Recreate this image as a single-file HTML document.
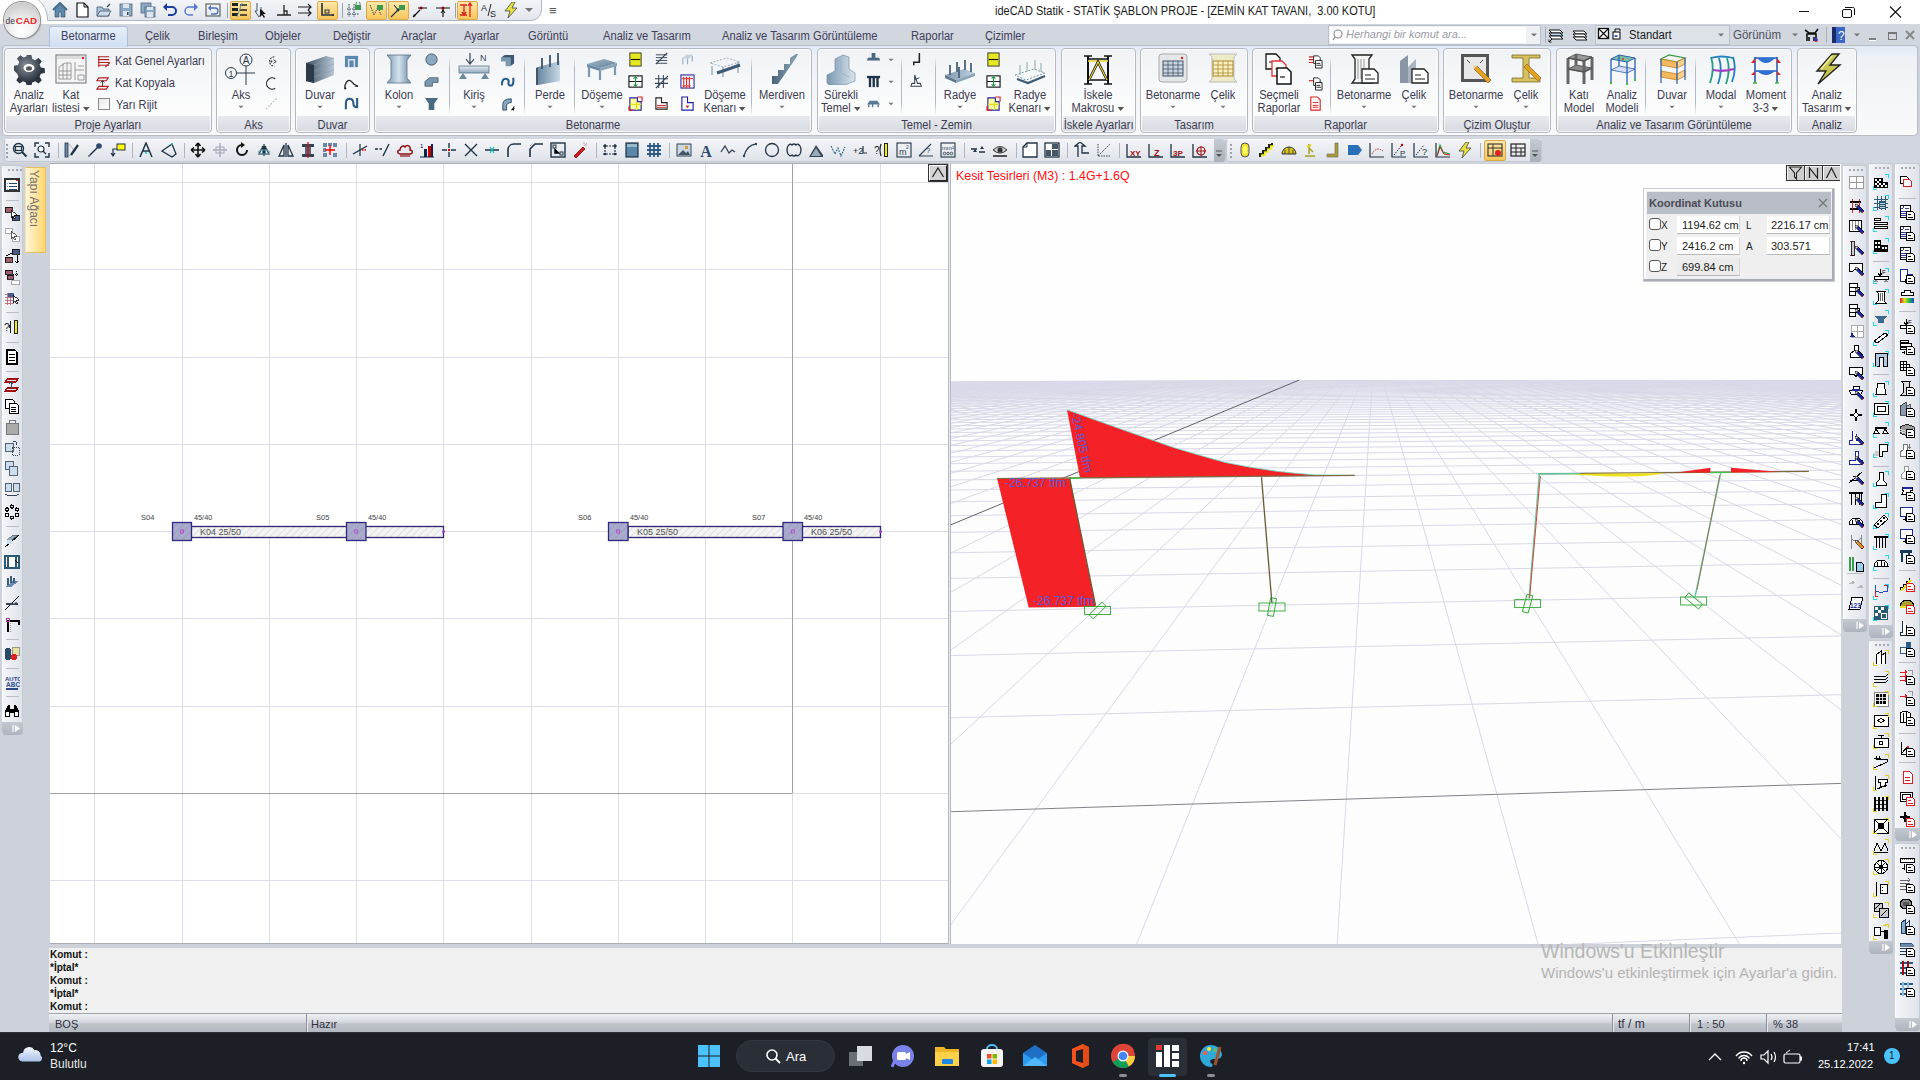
<!DOCTYPE html><html><head><meta charset="utf-8"><style>
*{margin:0;padding:0;box-sizing:border-box}
html,body{width:1920px;height:1080px;overflow:hidden;background:#cdd2da;font-family:"Liberation Sans",sans-serif;}
.a{position:absolute}
.t{position:absolute;white-space:nowrap;line-height:1}
svg{position:absolute;overflow:hidden}
</style></head><body>
<div class="a" style="left:0px;top:0px;width:1920px;height:24px;background:#fff"></div>
<div class="a" style="left:0px;top:24px;width:1920px;height:22px;background:#d2d7df"></div>
<div class="a" style="left:2px;top:45px;width:1916px;height:91px;background:linear-gradient(#dfe9f6 0%,#eef1f5 12%,#f5f6f8 60%,#f9f9fa 100%);border:1px solid #b9bec6;border-radius:4px"></div>
<div class="a" style="left:0px;top:136px;width:1920px;height:27px;background:#d2d7df"></div>
<svg style="left:0;top:0" width="560" height="24"><defs><linearGradient id="qg" x1="0" y1="0" x2="0" y2="1"><stop offset="0" stop-color="#f3f5f8"/><stop offset="1" stop-color="#e2e6ec"/></linearGradient></defs><path d="M37.5,-1 A27,27 0 0 1 47.5,18 V20.5 H531 A10.5,10.5 0 0 0 541.5,10 V-1 Z" fill="url(#qg)" stroke="#aeb6c2" stroke-width="1"/></svg>
<div class="a" style="left:4px;top:2px;width:36px;height:36px;border-radius:50%;background:radial-gradient(circle at 50% 80%,#ffffff 0%,#f4f4f4 30%,#d0d0d0 75%,#c4c4c4 100%);box-shadow:0 0 0 1px #8a8a8a, 1px 1px 2px rgba(0,0,0,.3)"></div>
<svg style="left:0;top:0" width="44" height="40"><text x="5.5" y="23.8" font-family="Liberation Sans" font-size="9.5" fill="#3a3a3a" textLength="9.5" lengthAdjust="spacingAndGlyphs">de</text><text x="15.8" y="23.8" font-family="Liberation Sans" font-size="9.5" font-weight="bold" fill="#e82828" textLength="21.3" lengthAdjust="spacingAndGlyphs">CAD</text></svg>
<div class="a" style="left:230px;top:1px;width:21px;height:19px;border-radius:2px;background:linear-gradient(#fde7a8,#f7c65a);border:1px solid #d9a94a"></div>
<div class="a" style="left:317px;top:1px;width:21px;height:19px;border-radius:2px;background:linear-gradient(#fde7a8,#f7c65a);border:1px solid #d9a94a"></div>
<div class="a" style="left:366px;top:1px;width:21px;height:19px;border-radius:2px;background:linear-gradient(#fde7a8,#f7c65a);border:1px solid #d9a94a"></div>
<div class="a" style="left:388px;top:1px;width:21px;height:19px;border-radius:2px;background:linear-gradient(#fde7a8,#f7c65a);border:1px solid #d9a94a"></div>
<div class="a" style="left:457px;top:1px;width:21px;height:19px;border-radius:2px;background:linear-gradient(#fde7a8,#f7c65a);border:1px solid #d9a94a"></div>
<div class="a" style="left:227px;top:3px;width:1px;height:15px;background:#9aa2ae"></div>
<div class="a" style="left:342px;top:3px;width:1px;height:15px;background:#9aa2ae"></div>
<div class="a" style="left:455px;top:3px;width:1px;height:15px;background:#9aa2ae"></div>
<svg style="left:52px;top:2px" width="16" height="16" viewBox="0 0 16 16"><path d="M1,8L8,1L15,8" fill="none" stroke="#3d6a8a" stroke-width="2"/><path d="M3,8V15H7V10H9V15H13V8L8,3Z" fill="#5b8bb0" stroke="#345" stroke-width="0.6"/></svg>
<svg style="left:74px;top:2px" width="16" height="16" viewBox="0 0 16 16"><path d="M3,1H10L14,5V15H3Z" fill="#fff" stroke="#111" stroke-width="1.2"/><path d="M10,1V5H14" fill="none" stroke="#111"/></svg>
<svg style="left:96px;top:2px" width="16" height="16" viewBox="0 0 16 16"><path d="M1,5H6L7,7H13V14H1Z" fill="#a8c4dc" stroke="#456" stroke-width="0.8"/><path d="M1,14L4,9H15L12,14Z" fill="#c8dcec" stroke="#456" stroke-width="0.8"/><path d="M11,5L14,2" stroke="#345" stroke-width="1.2"/></svg>
<svg style="left:118px;top:2px" width="16" height="16" viewBox="0 0 16 16"><rect x="2" y="2" width="12" height="12" fill="#8aa8c4" stroke="#567" stroke-width="0.8"/><rect x="5" y="2" width="6" height="4" fill="#dde6ee"/><rect x="5" y="9" width="6" height="5" fill="#dde6ee"/><rect x="9" y="10" width="1.5" height="3" fill="#345"/></svg>
<svg style="left:140px;top:2px" width="16" height="16" viewBox="0 0 16 16"><rect x="1" y="1" width="10" height="10" fill="#8aa8c4" stroke="#567" stroke-width="0.8"/><rect x="5" y="5" width="10" height="10" fill="#8aa8c4" stroke="#567" stroke-width="0.8"/><rect x="7" y="5" width="6" height="3" fill="#dde6ee"/><rect x="7" y="10" width="6" height="5" fill="#dde6ee"/></svg>
<svg style="left:162px;top:2px" width="16" height="16" viewBox="0 0 16 16"><path d="M4,5H10A4,4 0 0 1 10,13H6" fill="none" stroke="#1a3ea0" stroke-width="2"/><path d="M1,5L5,1V9Z" fill="#1a3ea0"/></svg>
<svg style="left:183px;top:2px" width="16" height="16" viewBox="0 0 16 16"><path d="M12,5H6A4,4 0 0 0 6,13H10" fill="none" stroke="#5a7ad0" stroke-width="1.5"/><path d="M15,5L11,1V9Z" fill="#5a7ad0"/></svg>
<svg style="left:205px;top:2px" width="16" height="16" viewBox="0 0 16 16"><rect x="1" y="2" width="14" height="12" fill="none" stroke="#555" stroke-width="1.1"/><path d="M5,6H10A3,3 0 0 1 10,12H6" fill="none" stroke="#4a70c0" stroke-width="1.3"/><path d="M3,6L6,3V9Z" fill="#4a70c0"/></svg>
<svg style="left:232px;top:2px" width="16" height="16" viewBox="0 0 16 16"><rect x="0" y="1" width="6" height="3" fill="#222"/><rect x="0" y="6" width="6" height="3" fill="#222"/><rect x="0" y="11" width="6" height="3" fill="#222"/><path d="M8,3H15M8,8H15M8,13H15" stroke="#222" stroke-width="1.4"/><path d="M5,15L10,1" stroke="#59a" stroke-width="1"/></svg>
<svg style="left:253px;top:2px" width="16" height="16" viewBox="0 0 16 16"><path d="M4,1V9H2L6,15L10,9H8V5" fill="none" stroke="#456" stroke-width="1"/><path d="M7,7L7,15L9,13L11,16L12,15L10,12L13,12Z" fill="#111"/></svg>
<svg style="left:276px;top:2px" width="16" height="16" viewBox="0 0 16 16"><path d="M1,13H15M8,13V3M8,9H11V13" fill="none" stroke="#222" stroke-width="1.3"/></svg>
<svg style="left:297px;top:2px" width="16" height="16" viewBox="0 0 16 16"><path d="M1,5H14M1,11H14M11,2L14,5L11,8M11,8L14,11L11,14" fill="none" stroke="#222" stroke-width="1.2"/></svg>
<svg style="left:319px;top:2px" width="16" height="16" viewBox="0 0 16 16"><path d="M3,1V13H15" fill="none" stroke="#234" stroke-width="1.6"/><rect x="6" y="8" width="4" height="3" fill="none" stroke="#234"/><circle cx="14" cy="13" r="1" fill="#234"/></svg>
<svg style="left:346px;top:2px" width="16" height="16" viewBox="0 0 16 16"><path d="M3,2V15M8,2V15M1,7H13M1,12H13" stroke="#234" stroke-width="0.9" stroke-dasharray="1.5,1"/><rect x="9" y="3" width="6" height="5" fill="#3a9a50"/><path d="M10,3V1.5A2,2 0 0 1 14,1.5V3" fill="none" stroke="#3a9a50"/></svg>
<svg style="left:368px;top:2px" width="16" height="16" viewBox="0 0 16 16"><path d="M2,3L6,13L10,5L13,13" fill="none" stroke="#234" stroke-width="0.9" stroke-dasharray="1.5,1"/><rect x="9" y="3" width="6" height="5" fill="#3a9a50"/></svg>
<svg style="left:390px;top:2px" width="16" height="16" viewBox="0 0 16 16"><path d="M1,15L9,7M4,3L9,9" stroke="#234" stroke-width="1.1"/><circle cx="8" cy="8" r="1.4" fill="#234"/><rect x="9" y="3" width="6" height="5" fill="#3a9a50"/></svg>
<svg style="left:412px;top:2px" width="16" height="16" viewBox="0 0 16 16"><path d="M1,15L8,8M6,6H15" stroke="#111" stroke-width="1.2"/><circle cx="9" cy="6" r="1.5" fill="#900"/><path d="M1,15L4,14L2,12Z" fill="#111"/></svg>
<svg style="left:435px;top:2px" width="16" height="16" viewBox="0 0 16 16"><path d="M1,6H15M8,6V15" stroke="#111" stroke-width="1.2"/><circle cx="8" cy="6" r="1.5" fill="#900"/><path d="M6,11L8,8L10,11" fill="none" stroke="#111"/></svg>
<svg style="left:459px;top:2px" width="16" height="16" viewBox="0 0 16 16"><path d="M1,3H8M1,13H8" stroke="#e02020" stroke-width="1.3"/><path d="M5,3V13M11,1V15M9,4L11,1L13,4M3,10L5,13L7,10" fill="none" stroke="#e02020" stroke-width="1.3"/></svg>
<svg style="left:481px;top:2px" width="16" height="16" viewBox="0 0 16 16"><text x="0" y="9" font-size="9" fill="#222">A</text><path d="M7,14L10,2" stroke="#222"/><text x="9" y="15" font-size="9" fill="#222">S</text></svg>
<svg style="left:503px;top:2px" width="16" height="16" viewBox="0 0 16 16"><path d="M9,0L2,9H7L5,16L14,6H9L12,0Z" fill="#e8e040" stroke="#444" stroke-width="0.8"/></svg>
<svg style="left:521px;top:2px" width="16" height="16" viewBox="0 0 16 16"><path d="M4,6H12L8,10Z" fill="#777"/></svg>
<div class="t" style="left:549px;top:4px;font-size:10px;color:#555;"><b style="font-size:13px;color:#555">&#8801;</b></div>
<div class="t" style="left:995px;top:5px;font-size:12.5px;color:#1a1a1a;transform:scaleX(.88);transform-origin:left">ideCAD Statik - STATİK ŞABLON PROJE - [ZEMİN KAT TAVANI,&nbsp; 3.00 KOTU]</div>
<svg style="left:1795px;top:4px" width="120" height="16"><path d="M4,7.5H14" stroke="#111" stroke-width="1"/><rect x="47.5" y="5.5" width="9" height="8" rx="1.5" fill="none" stroke="#111"/><path d="M50,3.5H57.5A1.5,1.5 0 0 1 59.5,5V11" fill="none" stroke="#111"/><path d="M95,2.5L106,13.5M106,2.5L95,13.5" stroke="#111" stroke-width="1.1"/></svg>
<div class="a" style="left:49px;top:26px;width:79px;height:21px;background:linear-gradient(#e6eef9,#cfdff3);border:1px solid #aebfd6;border-bottom:none;border-radius:3px 3px 0 0"></div>
<div class="t" style="left:61px;top:30px;font-size:12px;color:#40405a;transform:scaleX(.93);transform-origin:left">Betonarme</div>
<div class="t" style="left:145px;top:30px;font-size:12px;color:#40405a;transform:scaleX(.93);transform-origin:left">Çelik</div>
<div class="t" style="left:198px;top:30px;font-size:12px;color:#40405a;transform:scaleX(.93);transform-origin:left">Birleşim</div>
<div class="t" style="left:265px;top:30px;font-size:12px;color:#40405a;transform:scaleX(.93);transform-origin:left">Objeler</div>
<div class="t" style="left:333px;top:30px;font-size:12px;color:#40405a;transform:scaleX(.93);transform-origin:left">Değiştir</div>
<div class="t" style="left:401px;top:30px;font-size:12px;color:#40405a;transform:scaleX(.93);transform-origin:left">Araçlar</div>
<div class="t" style="left:464px;top:30px;font-size:12px;color:#40405a;transform:scaleX(.93);transform-origin:left">Ayarlar</div>
<div class="t" style="left:528px;top:30px;font-size:12px;color:#40405a;transform:scaleX(.93);transform-origin:left">Görüntü</div>
<div class="t" style="left:603px;top:30px;font-size:12px;color:#40405a;transform:scaleX(.93);transform-origin:left">Analiz ve Tasarım</div>
<div class="t" style="left:722px;top:30px;font-size:12px;color:#40405a;transform:scaleX(.93);transform-origin:left">Analiz ve Tasarım Görüntüleme</div>
<div class="t" style="left:911px;top:30px;font-size:12px;color:#40405a;transform:scaleX(.93);transform-origin:left">Raporlar</div>
<div class="t" style="left:985px;top:30px;font-size:12px;color:#40405a;transform:scaleX(.93);transform-origin:left">Çizimler</div>
<div class="a" style="left:1328px;top:25px;width:213px;height:20px;background:#eef0f3;border:1px solid #b8c0cc"></div>
<div class="a" style="left:1330px;top:27px;width:196px;height:16px;background:#fff"></div>
<svg style="left:1332px;top:28px" width="14" height="14"><circle cx="6" cy="6" r="4" fill="none" stroke="#888" stroke-width="1.1"/><path d="M3,9L1,12" stroke="#888" stroke-width="1.3"/></svg>
<div class="t" style="left:1346px;top:29px;font-size:11px;color:#9a9aa4;font-style:italic">Herhangi bir komut ara...</div>
<svg style="left:1528px;top:29px" width="12" height="12" viewBox="0 0 16 16"><path d="M4,6H12L8,10Z" fill="#777"/></svg>
<div class="a" style="left:1545px;top:27px;width:1px;height:16px;background:#a8b0bc"></div>
<svg style="left:1548px;top:27px" width="16" height="16" viewBox="0 0 16 16"><path d="M1,3H12L15,6H4Z" fill="#fff" stroke="#111" stroke-width="1"/><path d="M1,6H12L15,9H4Z" fill="#bcd8f0" stroke="#111" stroke-width="1"/><path d="M1,9H12L15,12H4Z" fill="#fff" stroke="#111" stroke-width="1"/><path d="M1,15L4,12M1,15V12.5M1,15H3.5" stroke="#111" stroke-width="1"/></svg>
<svg style="left:1572px;top:27px" width="16" height="16" viewBox="0 0 16 16"><path d="M1,4H12L15,7H4Z" fill="#fff" stroke="#111" stroke-width="1"/><path d="M1,7H12L15,10H4Z" fill="#fff" stroke="#111" stroke-width="1"/><path d="M1,10H12L15,13H4Z" fill="#fff" stroke="#111" stroke-width="1"/></svg>
<div class="a" style="left:1595px;top:25px;width:135px;height:20px;background:#dde2e8;border:1px solid #b8c0cc"></div>
<svg style="left:1597px;top:27px" width="30" height="14"><rect x="1.5" y="1.5" width="10" height="10" fill="#fff" stroke="#111" stroke-width="1.3"/><path d="M2,2L11,11M11,2L2,11" stroke="#111" stroke-width="1.2"/><rect x="16" y="5" width="7" height="7" fill="#fff" stroke="#111" stroke-width="1.1"/><path d="M18,5V2H23V4" fill="none" stroke="#111"/><rect x="17.5" y="8" width="3" height="2" fill="#4060c0"/></svg>
<div class="t" style="left:1629px;top:29px;font-size:12px;color:#1a1a1a;transform:scaleX(.94);transform-origin:left">Standart</div>
<svg style="left:1715px;top:29px" width="12" height="12" viewBox="0 0 16 16"><path d="M4,6H12L8,10Z" fill="#777"/></svg>
<div class="t" style="left:1733px;top:29px;font-size:12px;color:#505060;transform:scaleX(.96);transform-origin:left">Görünüm</div>
<svg style="left:1789px;top:29px" width="12" height="12" viewBox="0 0 16 16"><path d="M4,6H12L8,10Z" fill="#777"/></svg>
<svg style="left:1803px;top:27px" width="16" height="16" viewBox="0 0 16 16"><path d="M2,3L6,6H12L15,2M4,14V7H13V14M6,14V10M11,14V10" fill="none" stroke="#111" stroke-width="1.6"/><circle cx="13" cy="13" r="2" fill="#e02020"/><rect x="11" y="11" width="3" height="3" fill="#2040c0"/></svg>
<div class="a" style="left:1826px;top:27px;width:1px;height:16px;background:#a8b0bc"></div>
<svg style="left:1832px;top:27px" width="13" height="16"><rect x="0" y="0" width="13" height="16" fill="#3a66c8"/><rect x="0" y="0" width="4" height="16" fill="#1a2a6a"/><text x="6" y="13" font-size="12" fill="#fff">?</text></svg>
<svg style="left:1851px;top:29px" width="12" height="12" viewBox="0 0 16 16"><path d="M4,6H12L8,10Z" fill="#777"/></svg>
<svg style="left:1864px;top:28px" width="56" height="14"><path d="M5,11H12" stroke="#666" stroke-width="1.6"/><path d="M5,12.5H12" stroke="#fff" stroke-width="1"/><rect x="24.5" y="5.5" width="8" height="6" fill="none" stroke="#777" stroke-width="1"/><rect x="24" y="4" width="9" height="2" fill="#777"/><path d="M42,3L50,11M50,3L42,11" stroke="#888" stroke-width="2"/></svg>
<div class="a" style="left:4px;top:48px;width:208px;height:85px;border:1px solid #b4b9c1;border-radius:4px;background:linear-gradient(#f1f2f5 0%,#f8f9fa 50%,#fdfdfd 80.5%,#e7e9ed 81%,#d6dae0 100%);box-shadow:inset 0 0 0 1px rgba(255,255,255,.8)"></div>
<div class="t" style="left:4px;top:119px;width:208px;text-align:center;font-size:12px;color:#3c3c50;transform:scaleX(.93)">Proje Ayarları</div>
<div class="a" style="left:216px;top:48px;width:75px;height:85px;border:1px solid #b4b9c1;border-radius:4px;background:linear-gradient(#f1f2f5 0%,#f8f9fa 50%,#fdfdfd 80.5%,#e7e9ed 81%,#d6dae0 100%);box-shadow:inset 0 0 0 1px rgba(255,255,255,.8)"></div>
<div class="t" style="left:216px;top:119px;width:75px;text-align:center;font-size:12px;color:#3c3c50;transform:scaleX(.93)">Aks</div>
<div class="a" style="left:295px;top:48px;width:75px;height:85px;border:1px solid #b4b9c1;border-radius:4px;background:linear-gradient(#f1f2f5 0%,#f8f9fa 50%,#fdfdfd 80.5%,#e7e9ed 81%,#d6dae0 100%);box-shadow:inset 0 0 0 1px rgba(255,255,255,.8)"></div>
<div class="t" style="left:295px;top:119px;width:75px;text-align:center;font-size:12px;color:#3c3c50;transform:scaleX(.93)">Duvar</div>
<div class="a" style="left:374px;top:48px;width:438px;height:85px;border:1px solid #b4b9c1;border-radius:4px;background:linear-gradient(#f1f2f5 0%,#f8f9fa 50%,#fdfdfd 80.5%,#e7e9ed 81%,#d6dae0 100%);box-shadow:inset 0 0 0 1px rgba(255,255,255,.8)"></div>
<div class="t" style="left:374px;top:119px;width:438px;text-align:center;font-size:12px;color:#3c3c50;transform:scaleX(.93)">Betonarme</div>
<div class="a" style="left:817px;top:48px;width:239px;height:85px;border:1px solid #b4b9c1;border-radius:4px;background:linear-gradient(#f1f2f5 0%,#f8f9fa 50%,#fdfdfd 80.5%,#e7e9ed 81%,#d6dae0 100%);box-shadow:inset 0 0 0 1px rgba(255,255,255,.8)"></div>
<div class="t" style="left:817px;top:119px;width:239px;text-align:center;font-size:12px;color:#3c3c50;transform:scaleX(.93)">Temel - Zemin</div>
<div class="a" style="left:1061px;top:48px;width:75px;height:85px;border:1px solid #b4b9c1;border-radius:4px;background:linear-gradient(#f1f2f5 0%,#f8f9fa 50%,#fdfdfd 80.5%,#e7e9ed 81%,#d6dae0 100%);box-shadow:inset 0 0 0 1px rgba(255,255,255,.8)"></div>
<div class="t" style="left:1061px;top:119px;width:75px;text-align:center;font-size:12px;color:#3c3c50;transform:scaleX(.93)">İskele Ayarları</div>
<div class="a" style="left:1140px;top:48px;width:108px;height:85px;border:1px solid #b4b9c1;border-radius:4px;background:linear-gradient(#f1f2f5 0%,#f8f9fa 50%,#fdfdfd 80.5%,#e7e9ed 81%,#d6dae0 100%);box-shadow:inset 0 0 0 1px rgba(255,255,255,.8)"></div>
<div class="t" style="left:1140px;top:119px;width:108px;text-align:center;font-size:12px;color:#3c3c50;transform:scaleX(.93)">Tasarım</div>
<div class="a" style="left:1252px;top:48px;width:187px;height:85px;border:1px solid #b4b9c1;border-radius:4px;background:linear-gradient(#f1f2f5 0%,#f8f9fa 50%,#fdfdfd 80.5%,#e7e9ed 81%,#d6dae0 100%);box-shadow:inset 0 0 0 1px rgba(255,255,255,.8)"></div>
<div class="t" style="left:1252px;top:119px;width:187px;text-align:center;font-size:12px;color:#3c3c50;transform:scaleX(.93)">Raporlar</div>
<div class="a" style="left:1443px;top:48px;width:108px;height:85px;border:1px solid #b4b9c1;border-radius:4px;background:linear-gradient(#f1f2f5 0%,#f8f9fa 50%,#fdfdfd 80.5%,#e7e9ed 81%,#d6dae0 100%);box-shadow:inset 0 0 0 1px rgba(255,255,255,.8)"></div>
<div class="t" style="left:1443px;top:119px;width:108px;text-align:center;font-size:12px;color:#3c3c50;transform:scaleX(.93)">Çizim Oluştur</div>
<div class="a" style="left:1556px;top:48px;width:236px;height:85px;border:1px solid #b4b9c1;border-radius:4px;background:linear-gradient(#f1f2f5 0%,#f8f9fa 50%,#fdfdfd 80.5%,#e7e9ed 81%,#d6dae0 100%);box-shadow:inset 0 0 0 1px rgba(255,255,255,.8)"></div>
<div class="t" style="left:1556px;top:119px;width:236px;text-align:center;font-size:12px;color:#3c3c50;transform:scaleX(.93)">Analiz ve Tasarım Görüntüleme</div>
<div class="a" style="left:1797px;top:48px;width:60px;height:85px;border:1px solid #b4b9c1;border-radius:4px;background:linear-gradient(#f1f2f5 0%,#f8f9fa 50%,#fdfdfd 80.5%,#e7e9ed 81%,#d6dae0 100%);box-shadow:inset 0 0 0 1px rgba(255,255,255,.8)"></div>
<div class="t" style="left:1797px;top:119px;width:60px;text-align:center;font-size:12px;color:#3c3c50;transform:scaleX(.93)">Analiz</div>
<svg style="left:13px;top:53px" width="32" height="32" viewBox="0 0 32 32"><defs><radialGradient id="gg" cx="40%" cy="35%"><stop offset="0" stop-color="#8a929e"/><stop offset="1" stop-color="#2e3542"/></radialGradient></defs><path d="M13.5,2h5l.8,4.2 3.2,1.4 3.6-2.4 3.5,3.5-2.4,3.6 1.4,3.2 4.2.8v5l-4.2.8-1.4,3.2 2.4,3.6-3.5,3.5-3.6-2.4-3.2,1.4-.8,4.2h-5l-.8-4.2-3.2-1.4-3.6,2.4-3.5-3.5 2.4-3.6-1.4-3.2L0,18.5v-5l4.2-.8 1.4-3.2L3.2,5.9 6.7,2.4l3.6,2.4 3.2-1.4z" fill="url(#gg)" transform="translate(1,0) scale(.94)"/><ellipse cx="16" cy="15" rx="5.5" ry="4" fill="#fff"/><ellipse cx="16" cy="15.5" rx="3" ry="2.2" fill="#555"/></svg>
<div class="t" style="left:-31px;top:89px;font-size:12px;color:#3c3c50;"><div style="width:120px;text-align:center;transform:scaleX(.93)">Analiz</div></div>
<div class="t" style="left:-31px;top:102px;font-size:12px;color:#3c3c50;"><div style="width:120px;text-align:center;transform:scaleX(.93)">Ayarları</div></div>
<svg style="left:55px;top:53px" width="32" height="32" viewBox="0 0 32 32"><rect x="1" y="2" width="30" height="28" fill="#f4f4f4" stroke="#888" stroke-width="1.2"/><rect x="2" y="3" width="28" height="3" fill="#ddd"/><circle cx="28" cy="5" r="1.2" fill="#e02020"/><g stroke="#888" stroke-width="0.8" fill="none"><path d="M4,14L10,10H16V26H4Z"/><path d="M4,18H16M4,22H16M8,10V26M12,10V26"/><path d="M20,9V27M23,13H29M20,17H29M23,22H29V27H23Z"/></g></svg>
<div class="t" style="left:11px;top:89px;font-size:12px;color:#3c3c50;"><div style="width:120px;text-align:center;transform:scaleX(.93)">Kat</div></div>
<div class="t" style="left:11px;top:102px;font-size:12px;color:#3c3c50;"><div style="width:120px;text-align:center;transform:scaleX(.93)">listesi<svg width="9" height="6" style="position:static;display:inline-block;vertical-align:middle;margin-left:2px"><path d="M1,1H8L4.5,5Z" fill="#555"/></svg></div></div>
<svg style="left:96px;top:54px" width="15" height="15" viewBox="0 0 16 16"><path d="M2,3H14M2,6H14M2,9H14M2,12H14M3,2V14" stroke="#b02020" stroke-width="1.1"/><path d="M10,14L15,9" stroke="#b02020" stroke-width="1.3"/></svg>
<div class="t" style="left:115px;top:55px;font-size:12px;color:#3c3c50;transform:scaleX(.925);transform-origin:left">Kat Genel Ayarları</div>
<svg style="left:96px;top:76px" width="15" height="15" viewBox="0 0 16 16"><path d="M3,2H13L11,5H1Z M3,11H13L11,14H1Z" fill="none" stroke="#b02020" stroke-width="1.2"/><path d="M7,5V11M5,7L7,5L9,7" fill="none" stroke="#333" stroke-width="1"/></svg>
<div class="t" style="left:115px;top:77px;font-size:12px;color:#3c3c50;transform:scaleX(.925);transform-origin:left">Kat Kopyala</div>
<div class="a" style="left:98px;top:98px;width:12px;height:12px;background:linear-gradient(135deg,#e8e8e8,#fff);border:1px solid #8a8a8a"></div>
<div class="t" style="left:116px;top:99px;font-size:12px;color:#3c3c50;transform:scaleX(.925);transform-origin:left">Yarı Rijit</div>
<svg style="left:225px;top:53px" width="32" height="32" viewBox="0 0 32 32"><circle cx="21" cy="7" r="6" fill="none" stroke="#2a3a48" stroke-width="1"/><text x="21" y="11" font-size="10" text-anchor="middle" fill="#2a3a48">A</text><circle cx="6" cy="20" r="5.5" fill="none" stroke="#2a3a48" stroke-width="1"/><text x="6" y="24" font-size="9" text-anchor="middle" fill="#2a3a48">1</text><path d="M21,13V32M11.5,20H30" stroke="#2a3a48" stroke-width="1"/></svg>
<div class="t" style="left:181px;top:89px;font-size:12px;color:#3c3c50;"><div style="width:120px;text-align:center;transform:scaleX(.93)">Aks</div></div>
<svg style="left:236px;top:102px" width="10" height="10" viewBox="0 0 16 16"><path d="M4,6H12L8,10Z" fill="#777"/></svg>
<svg style="left:264px;top:54px" width="15" height="15" viewBox="0 0 16 16"><path d="M11,3A5,5 0 1 0 11,13" fill="none" stroke="#333" stroke-width="1.2" stroke-dasharray="2,1"/><circle cx="8" cy="8" r="1" fill="#333"/><path d="M10,6L13,8L10,10" fill="none" stroke="#333"/></svg>
<svg style="left:264px;top:76px" width="15" height="15" viewBox="0 0 16 16"><path d="M12,3A6,6 0 1 0 12,13" fill="none" stroke="#333" stroke-width="1.3"/></svg>
<svg style="left:264px;top:96px" width="15" height="15" viewBox="0 0 16 16"><path d="M2,14L14,2" stroke="#bbb" stroke-width="1.2" stroke-dasharray="2,1.5"/></svg>
<svg style="left:304px;top:53px" width="32" height="32" viewBox="0 0 32 32"><defs><linearGradient id="dw" x1="0" x2="1"><stop offset="0" stop-color="#3e5060"/><stop offset="1" stop-color="#b8c8d6"/></linearGradient></defs><path d="M2,10L22,3L30,5V22L10,30L2,28Z" fill="url(#dw)"/><path d="M2,10L10,12V30L2,28Z" fill="#2c3a48"/><path d="M10,12L30,5M10,18L30,11M10,24L30,17" stroke="#8aa0b4" stroke-width="0.6"/></svg>
<div class="t" style="left:260px;top:89px;font-size:12px;color:#3c3c50;"><div style="width:120px;text-align:center;transform:scaleX(.93)">Duvar</div></div>
<svg style="left:315px;top:102px" width="10" height="10" viewBox="0 0 16 16"><path d="M4,6H12L8,10Z" fill="#777"/></svg>
<svg style="left:344px;top:54px" width="15" height="15" viewBox="0 0 16 16"><rect x="1" y="2" width="14" height="12" fill="#5a8ab0"/><path d="M5,14V6H11V14" fill="none" stroke="#dde" stroke-width="1.6"/></svg>
<svg style="left:344px;top:76px" width="15" height="15" viewBox="0 0 16 16"><path d="M1,14V10Q4,2 8,6Q11,10 15,11" fill="none" stroke="#223" stroke-width="1.4"/><circle cx="1.5" cy="13" r="1" fill="#223"/><path d="M12,11H15" stroke="#223"/></svg>
<svg style="left:344px;top:96px" width="15" height="15" viewBox="0 0 16 16"><path d="M2,14V8Q2,3 6,3T10,8Q10,12 14,12V2" fill="none" stroke="#2a5a88" stroke-width="2.2"/></svg>
<svg style="left:383px;top:53px" width="32" height="32" viewBox="0 0 32 32"><defs><linearGradient id="kl" x1="0" x2="1"><stop offset="0" stop-color="#7c9ab4"/><stop offset=".5" stop-color="#d4e2ee"/><stop offset="1" stop-color="#6c88a0"/></linearGradient></defs><path d="M4,2H28L24,7V25L28,30H4L8,25V7Z" fill="url(#kl)" stroke="#5a7488" stroke-width="0.8"/></svg>
<div class="t" style="left:338.6px;top:89px;font-size:12px;color:#3c3c50;"><div style="width:120px;text-align:center;transform:scaleX(.93)">Kolon</div></div>
<svg style="left:394px;top:102px" width="10" height="10" viewBox="0 0 16 16"><path d="M4,6H12L8,10Z" fill="#777"/></svg>
<svg style="left:424px;top:52px" width="15" height="15" viewBox="0 0 16 16"><circle cx="8" cy="8" r="6" fill="#8aa8c0" stroke="#456"/></svg>
<svg style="left:424px;top:74px" width="15" height="15" viewBox="0 0 16 16"><path d="M1,8L6,4H15V9H9V13H1Z" fill="#7a98b0" stroke="#456" stroke-width="0.8"/></svg>
<svg style="left:424px;top:96px" width="15" height="15" viewBox="0 0 16 16"><path d="M1,2H15L11,8V15H5V8Z" fill="#4a6a84"/></svg>
<div class="a" style="left:449px;top:57px;width:1px;height:58px;background:linear-gradient(rgba(180,186,196,0),#b4bac4 20%,#b4bac4 80%,rgba(180,186,196,0))"></div>
<svg style="left:458px;top:53px" width="32" height="32" viewBox="0 0 32 32"><defs><linearGradient id="kr" x1="0" y1="0" x2="0" y2="1"><stop offset="0" stop-color="#e4edf4"/><stop offset="1" stop-color="#8ea8bc"/></linearGradient></defs><path d="M12,0V10M8,6L12,11L16,6" fill="none" stroke="#345" stroke-width="1.2"/><text x="22" y="8" font-size="9" fill="#345">N</text><rect x="1" y="13" width="30" height="7" fill="url(#kr)" stroke="#5a7488" stroke-width="0.8"/><path d="M5,20L1,26H9ZM27,20L23,26H31Z" fill="#6a8aa4"/></svg>
<div class="t" style="left:414px;top:89px;font-size:12px;color:#3c3c50;"><div style="width:120px;text-align:center;transform:scaleX(.93)">Kiriş</div></div>
<svg style="left:469px;top:102px" width="10" height="10" viewBox="0 0 16 16"><path d="M4,6H12L8,10Z" fill="#777"/></svg>
<svg style="left:500px;top:54px" width="15" height="15" viewBox="0 0 16 16"><path d="M1,4L5,1H15V10L11,13V4Z" fill="#3a5a78"/><path d="M1,4H11V13H6V8H1Z" fill="#7a98b0"/></svg>
<svg style="left:500px;top:74px" width="15" height="15" viewBox="0 0 16 16"><path d="M2,12Q2,5 6,5T9,10Q9,13 13,12Q15,9 14,4" fill="none" stroke="#2a5a88" stroke-width="2.2"/></svg>
<svg style="left:500px;top:96px" width="15" height="15" viewBox="0 0 16 16"><path d="M3,15V9Q3,3 12,3V7Q7,7 7,11V15Z" fill="#8aa8c0" stroke="#2a4a68"/><path d="M12,15H15V11" stroke="#333" stroke-dasharray="1,1"/></svg>
<div class="a" style="left:524px;top:57px;width:1px;height:58px;background:linear-gradient(rgba(180,186,196,0),#b4bac4 20%,#b4bac4 80%,rgba(180,186,196,0))"></div>
<svg style="left:534px;top:53px" width="32" height="32" viewBox="0 0 32 32"><defs><linearGradient id="pd" x1="0" x2="1"><stop offset="0" stop-color="#6a88a0"/><stop offset="1" stop-color="#c8d8e6"/></linearGradient></defs><path d="M4,14L26,8V28L4,32Z" fill="url(#pd)"/><path d="M4,14L2,15V32H4Z" fill="#456"/><path d="M8,5V16M16,2V14M24,0V12" stroke="#3c5468" stroke-width="1.8"/></svg>
<div class="t" style="left:490px;top:89px;font-size:12px;color:#3c3c50;"><div style="width:120px;text-align:center;transform:scaleX(.93)">Perde</div></div>
<svg style="left:545px;top:102px" width="10" height="10" viewBox="0 0 16 16"><path d="M4,6H12L8,10Z" fill="#777"/></svg>
<div class="a" style="left:574px;top:57px;width:1px;height:58px;background:linear-gradient(rgba(180,186,196,0),#b4bac4 20%,#b4bac4 80%,rgba(180,186,196,0))"></div>
<svg style="left:586px;top:53px" width="32" height="32" viewBox="0 0 32 32"><defs><linearGradient id="ds" x1="0" y1="0" x2="1" y2="1"><stop offset="0" stop-color="#a8bccc"/><stop offset="1" stop-color="#5e7c94"/></linearGradient></defs><path d="M1,11L18,6L31,10L14,15Z" fill="url(#ds)"/><path d="M1,11L14,15V18L1,14Z" fill="#6a8aa4"/><path d="M14,15L31,10V13L14,18Z" fill="#8aa4b8"/><path d="M3,14V24M14,18V27M29,13V22" stroke="#7a98ae" stroke-width="2.2"/></svg>
<div class="t" style="left:542px;top:89px;font-size:12px;color:#3c3c50;"><div style="width:120px;text-align:center;transform:scaleX(.93)">Döşeme</div></div>
<svg style="left:597px;top:102px" width="10" height="10" viewBox="0 0 16 16"><path d="M4,6H12L8,10Z" fill="#777"/></svg>
<svg style="left:628px;top:52px" width="15" height="15" viewBox="0 0 16 16"><rect x="2" y="1" width="12" height="14" fill="#e8e820" stroke="#333"/><path d="M3,8H13" stroke="#111" stroke-width="1.2"/></svg>
<svg style="left:628px;top:74px" width="15" height="15" viewBox="0 0 16 16"><rect x="1" y="2" width="14" height="12" fill="#fff" stroke="#111" stroke-width="1.2"/><path d="M1,8H15" stroke="#111"/><path d="M8,3V13M6,5L8,3L10,5M6,11L8,13L10,11" fill="none" stroke="#1a9a40" stroke-width="1.1"/></svg>
<svg style="left:628px;top:96px" width="15" height="15" viewBox="0 0 16 16"><path d="M2,15V2H10V6H14V15Z" fill="#ffffa0" stroke="#2020a0" stroke-width="1.2"/><path d="M2,9H14M9,6V15" stroke="#e0e020" stroke-width="1.4"/><path d="M10,1H15V6M1,11V15H5" fill="none" stroke="#e02020" stroke-width="1.2"/></svg>
<svg style="left:654px;top:52px" width="15" height="15" viewBox="0 0 16 16"><path d="M2,3H14M2,6H14M2,9H14M2,12H14" stroke="#345" stroke-width="1"/><path d="M2,13L14,1" stroke="#345" stroke-width="1.3"/></svg>
<svg style="left:654px;top:74px" width="15" height="15" viewBox="0 0 16 16"><path d="M5,1V15M10,1V15M1,5H15M1,10H15" stroke="#345" stroke-width="1.1"/><path d="M2,15L15,2" stroke="#345" stroke-width="1.3"/></svg>
<svg style="left:654px;top:96px" width="15" height="15" viewBox="0 0 16 16"><path d="M2,2H8V7H14V14H2Z" fill="#fff" stroke="#222" stroke-width="1.2"/><path d="M3,10H13M3,12H13" stroke="#c02020"/></svg>
<svg style="left:680px;top:52px" width="15" height="15" viewBox="0 0 16 16"><path d="M2,7L7,3H14L9,7Z" fill="#c0d0dc"/><path d="M3,7V13M8,7V13M13,4V10" stroke="#9ab0c0" stroke-width="1.3"/></svg>
<svg style="left:680px;top:74px" width="15" height="15" viewBox="0 0 16 16"><rect x="1" y="1" width="14" height="14" fill="none" stroke="#2020a0" stroke-width="1.1"/><path d="M4,3V12M7,3V12M10,3V12M3,12L4,14L5,12M6,12L7,14L8,12M9,12L10,14L11,12" fill="none" stroke="#e02020" stroke-width="1.1"/><path d="M2,5H14" stroke="#e02020"/></svg>
<svg style="left:680px;top:96px" width="15" height="15" viewBox="0 0 16 16"><path d="M2,1H8V7H14V15H2Z" fill="#fff" stroke="#2020a0" stroke-width="1.2"/><path d="M6,10L8,13L10,10Z" fill="#e02020"/></svg>
<svg style="left:709px;top:53px" width="32" height="32" viewBox="0 0 32 32"><path d="M1,10L18,5L31,9L14,14Z" fill="none" stroke="#9ab0c0" stroke-width="1" stroke-dasharray="2,1.5"/><path d="M3,13V22M14,14V24M29,9V20" stroke="#9ab0c0" stroke-width="1.5"/><path d="M8,20L31,12" stroke="#3c5a74" stroke-width="3"/></svg>
<div class="t" style="left:665px;top:89px;font-size:12px;color:#3c3c50;"><div style="width:120px;text-align:center;transform:scaleX(.93)">Döşeme</div></div>
<div class="t" style="left:665px;top:102px;font-size:12px;color:#3c3c50;"><div style="width:120px;text-align:center;transform:scaleX(.93)">Kenarı<svg width="9" height="6" style="position:static;display:inline-block;vertical-align:middle;margin-left:2px"><path d="M1,1H8L4.5,5Z" fill="#555"/></svg></div></div>
<div class="a" style="left:751px;top:57px;width:1px;height:58px;background:linear-gradient(rgba(180,186,196,0),#b4bac4 20%,#b4bac4 80%,rgba(180,186,196,0))"></div>
<svg style="left:766px;top:53px" width="32" height="32" viewBox="0 0 32 32"><defs><linearGradient id="md" x1="0" x2="1"><stop offset="0" stop-color="#4a6478"/><stop offset="1" stop-color="#8aa4b8"/></linearGradient></defs><path d="M6,28V23H12V17H18V11H24V5H30L12,31H6Z" fill="url(#md)"/><path d="M24,5L30,1H32L30,5" fill="#7a94a8"/></svg>
<div class="t" style="left:722px;top:89px;font-size:12px;color:#3c3c50;"><div style="width:120px;text-align:center;transform:scaleX(.93)">Merdiven</div></div>
<svg style="left:777px;top:102px" width="10" height="10" viewBox="0 0 16 16"><path d="M4,6H12L8,10Z" fill="#777"/></svg>
<svg style="left:825px;top:53px" width="32" height="32" viewBox="0 0 32 32"><defs><linearGradient id="sr" x1="0" x2="1"><stop offset="0" stop-color="#7a98b0"/><stop offset="1" stop-color="#d8e4ee"/></linearGradient></defs><path d="M2,30V22L10,18V6L18,2L24,4V16L30,20V28L20,32H4Z" fill="url(#sr)" stroke="#6a8498" stroke-width="0.6"/><path d="M10,6L16,8V20L24,24" fill="none" stroke="#9ab" stroke-width="0.8"/></svg>
<div class="t" style="left:781px;top:89px;font-size:12px;color:#3c3c50;"><div style="width:120px;text-align:center;transform:scaleX(.93)">Sürekli</div></div>
<div class="t" style="left:781px;top:102px;font-size:12px;color:#3c3c50;"><div style="width:120px;text-align:center;transform:scaleX(.93)">Temel<svg width="9" height="6" style="position:static;display:inline-block;vertical-align:middle;margin-left:2px"><path d="M1,1H8L4.5,5Z" fill="#555"/></svg></div></div>
<svg style="left:866px;top:52px" width="15" height="15" viewBox="0 0 16 16"><path d="M6,1H10V6H14L15,9H1L2,6H6Z" fill="#4a6a84"/></svg>
<svg style="left:886px;top:55px" width="10" height="10" viewBox="0 0 16 16"><path d="M4,6H12L8,10Z" fill="#777"/></svg>
<svg style="left:866px;top:74px" width="15" height="15" viewBox="0 0 16 16"><rect x="1" y="2" width="14" height="2.5" fill="#1f3346"/><rect x="3" y="4" width="2.5" height="10" fill="#1f3346"/><rect x="7" y="4" width="2.5" height="10" fill="#1f3346"/><rect x="11" y="4" width="2.5" height="10" fill="#1f3346"/></svg>
<svg style="left:886px;top:77px" width="10" height="10" viewBox="0 0 16 16"><path d="M4,6H12L8,10Z" fill="#777"/></svg>
<svg style="left:866px;top:96px" width="15" height="15" viewBox="0 0 16 16"><path d="M1,9L4,5H12L15,9Z" fill="#5a7a94"/><path d="M3,9V12M13,9V12M7,7V12" stroke="#5a7a94" stroke-width="1.5"/></svg>
<svg style="left:886px;top:99px" width="10" height="10" viewBox="0 0 16 16"><path d="M4,6H12L8,10Z" fill="#777"/></svg>
<div class="a" style="left:901px;top:57px;width:1px;height:58px;background:linear-gradient(rgba(180,186,196,0),#b4bac4 20%,#b4bac4 80%,rgba(180,186,196,0))"></div>
<svg style="left:910px;top:52px" width="15" height="15" viewBox="0 0 16 16"><path d="M10,1V11H4V14" fill="none" stroke="#222" stroke-width="1.6"/><path d="M10,4V11" stroke="#222"/></svg>
<svg style="left:910px;top:74px" width="15" height="15" viewBox="0 0 16 16"><path d="M5,1V10H2L1,13H12L11,10H8Z" fill="none" stroke="#345" stroke-width="1.1"/><path d="M5,6L10,4" stroke="#345"/></svg>
<div class="a" style="left:935px;top:57px;width:1px;height:58px;background:linear-gradient(rgba(180,186,196,0),#b4bac4 20%,#b4bac4 80%,rgba(180,186,196,0))"></div>
<svg style="left:944px;top:53px" width="32" height="32" viewBox="0 0 32 32"><defs><linearGradient id="ry" x1="0" x2="1"><stop offset="0" stop-color="#7c98ae"/><stop offset="1" stop-color="#c0d2e0"/></linearGradient></defs><path d="M1,22L20,16L31,20L12,27Z" fill="url(#ry)"/><path d="M1,22L12,27V30L1,25Z" fill="#5c7890"/><path d="M12,27L31,20V23L12,30Z" fill="#8aa4b8"/><path d="M6,12V22M13,9V19M21,7V17M27,10V19M15,14V25" stroke="#4a6478" stroke-width="1.8"/></svg>
<div class="t" style="left:900px;top:89px;font-size:12px;color:#3c3c50;"><div style="width:120px;text-align:center;transform:scaleX(.93)">Radye</div></div>
<svg style="left:955px;top:102px" width="10" height="10" viewBox="0 0 16 16"><path d="M4,6H12L8,10Z" fill="#777"/></svg>
<svg style="left:986px;top:52px" width="15" height="15" viewBox="0 0 16 16"><rect x="2" y="1" width="12" height="14" fill="#e8e820" stroke="#333"/><path d="M3,8H13" stroke="#111" stroke-width="1.2"/></svg>
<svg style="left:986px;top:74px" width="15" height="15" viewBox="0 0 16 16"><rect x="1" y="2" width="14" height="12" fill="#fff" stroke="#111" stroke-width="1.2"/><path d="M1,8H15" stroke="#111"/><path d="M8,3V13M6,5L8,3L10,5M6,11L8,13L10,11" fill="none" stroke="#1a9a40" stroke-width="1.1"/></svg>
<svg style="left:986px;top:96px" width="15" height="15" viewBox="0 0 16 16"><path d="M2,15V2H10V6H14V15Z" fill="#ffffa0" stroke="#2020a0" stroke-width="1.2"/><path d="M2,9H14M9,6V15" stroke="#e0e020" stroke-width="1.4"/><path d="M10,1H15V6M1,11V15H5" fill="none" stroke="#e02020" stroke-width="1.2"/></svg>
<svg style="left:1014px;top:53px" width="32" height="32" viewBox="0 0 32 32"><path d="M1,22L20,16L31,20L12,27Z" fill="none" stroke="#7a94a8" stroke-width="1" stroke-dasharray="2,1.5"/><path d="M6,12V22M13,9V19M21,7V17M27,10V19" stroke="#8aa" stroke-width="1"/><path d="M3,26L14,30L31,23" fill="none" stroke="#3c5a74" stroke-width="2.2"/></svg>
<div class="t" style="left:970px;top:89px;font-size:12px;color:#3c3c50;"><div style="width:120px;text-align:center;transform:scaleX(.93)">Radye</div></div>
<div class="t" style="left:970px;top:102px;font-size:12px;color:#3c3c50;"><div style="width:120px;text-align:center;transform:scaleX(.93)">Kenarı<svg width="9" height="6" style="position:static;display:inline-block;vertical-align:middle;margin-left:2px"><path d="M1,1H8L4.5,5Z" fill="#555"/></svg></div></div>
<svg style="left:1082px;top:53px" width="32" height="32" viewBox="0 0 32 32"><path d="M6,3V31M26,3V31" stroke="#111" stroke-width="2"/><path d="M2,3H10M22,3H30M2,31H10M22,31H30" stroke="#111" stroke-width="1.6"/><path d="M6,6H26M6,27H26" stroke="#111" stroke-width="1.4"/><path d="M6,8H26" stroke="#e8d040" stroke-width="1.6"/><path d="M7,27L16,9L25,27" fill="none" stroke="#111" stroke-width="2.6"/><path d="M7,27L16,9L25,27" fill="none" stroke="#e8d040" stroke-width="1.2"/></svg>
<div class="t" style="left:1038px;top:89px;font-size:12px;color:#3c3c50;"><div style="width:120px;text-align:center;transform:scaleX(.93)">İskele</div></div>
<div class="t" style="left:1038px;top:102px;font-size:12px;color:#3c3c50;"><div style="width:120px;text-align:center;transform:scaleX(.93)">Makrosu<svg width="9" height="6" style="position:static;display:inline-block;vertical-align:middle;margin-left:2px"><path d="M1,1H8L4.5,5Z" fill="#555"/></svg></div></div>
<svg style="left:1157px;top:53px" width="32" height="32" viewBox="0 0 32 32"><rect x="2" y="1" width="28" height="28" rx="3" fill="#e4e6ea" stroke="#aaa"/><rect x="6" y="8" width="20" height="15" fill="#c8d4e0" stroke="#456"/><path d="M6,12H26M6,16H26M6,20H26M11,8V23M16,8V23M21,8V23" stroke="#456" stroke-width="0.8"/><circle cx="25" cy="5" r="1.2" fill="#e02020"/></svg>
<div class="t" style="left:1113px;top:89px;font-size:12px;color:#3c3c50;"><div style="width:120px;text-align:center;transform:scaleX(.93)">Betonarme</div></div>
<svg style="left:1168px;top:102px" width="10" height="10" viewBox="0 0 16 16"><path d="M4,6H12L8,10Z" fill="#777"/></svg>
<svg style="left:1207px;top:53px" width="32" height="32" viewBox="0 0 32 32"><path d="M2,1H30L27,4V26L30,29H2L5,26V4Z" fill="#eeeac8" stroke="#bbb"/><rect x="6" y="8" width="20" height="15" fill="#f8f0c0" stroke="#a88a30"/><path d="M6,12H26M6,16H26M6,20H26M11,8V23M16,8V23M21,8V23" stroke="#a88a30" stroke-width="0.8"/></svg>
<div class="t" style="left:1163px;top:89px;font-size:12px;color:#3c3c50;"><div style="width:120px;text-align:center;transform:scaleX(.93)">Çelik</div></div>
<svg style="left:1218px;top:102px" width="10" height="10" viewBox="0 0 16 16"><path d="M4,6H12L8,10Z" fill="#777"/></svg>
<svg style="left:1263px;top:53px" width="32" height="32" viewBox="0 0 32 32"><path d="M3,1H13L17,5V16H3Z" fill="#fff" stroke="#111" stroke-width="1.3"/><path d="M6,9H10" stroke="#111"/><path d="M9,8H19L23,12V23H9Z" fill="#fff" stroke="#e83030" stroke-width="1.3"/><path d="M12,16H16" stroke="#e83030"/><path d="M14,15H24L28,19V31H14Z" fill="#fff" stroke="#111" stroke-width="1.5"/><path d="M17,24H22" stroke="#111" stroke-width="1.2"/></svg>
<div class="t" style="left:1219px;top:89px;font-size:12px;color:#3c3c50;"><div style="width:120px;text-align:center;transform:scaleX(.93)">Seçmeli</div></div>
<div class="t" style="left:1219px;top:102px;font-size:12px;color:#3c3c50;"><div style="width:120px;text-align:center;transform:scaleX(.93)">Raporlar</div></div>
<svg style="left:1308px;top:54px" width="15" height="15" viewBox="0 0 16 16"><path d="M1,3H6M1,6H6M1,9H6" stroke="#e02020" stroke-width="1.2"/><path d="M6,2H11L13,4V10H6Z" fill="#fff" stroke="#222"/><path d="M8,7H15V15H8Z" fill="#fff" stroke="#222"/><path d="M9,10H13M9,12H14" stroke="#222"/></svg>
<svg style="left:1308px;top:76px" width="15" height="15" viewBox="0 0 16 16"><path d="M1,5H6" stroke="#e02020" stroke-width="1.2"/><path d="M6,2H11L13,4V10H6Z" fill="#fff" stroke="#222"/><path d="M8,7H15V15H8Z" fill="#fff" stroke="#222"/><path d="M9,10H13M9,12H14" stroke="#222"/></svg>
<svg style="left:1308px;top:96px" width="15" height="15" viewBox="0 0 16 16"><path d="M3,1H10L13,4V15H3Z" fill="#fff" stroke="#e02020" stroke-width="1.2"/><path d="M5,7H11M5,10H11M5,12H11" stroke="#e02020"/></svg>
<div class="a" style="left:1330px;top:57px;width:1px;height:58px;background:linear-gradient(rgba(180,186,196,0),#b4bac4 20%,#b4bac4 80%,rgba(180,186,196,0))"></div>
<svg style="left:1348px;top:53px" width="32" height="32" viewBox="0 0 32 32"><path d="M4,2H24L21,6V26L24,30H4L7,26V6Z" fill="#f4f4f4" stroke="#222" stroke-width="1.3"/><path d="M10,6V26M13,6V26M16,6V26" stroke="#999"/><path d="M14,16H26L30,20V30H14Z" fill="#fff" stroke="#222" stroke-width="1.3"/><path d="M17,22H23M17,26H27" stroke="#222" stroke-width="1.2"/></svg>
<div class="t" style="left:1304px;top:89px;font-size:12px;color:#3c3c50;"><div style="width:120px;text-align:center;transform:scaleX(.93)">Betonarme</div></div>
<svg style="left:1359px;top:102px" width="10" height="10" viewBox="0 0 16 16"><path d="M4,6H12L8,10Z" fill="#777"/></svg>
<svg style="left:1398px;top:53px" width="32" height="32" viewBox="0 0 32 32"><path d="M2,30V8L10,2V30Z" fill="#8a96a4"/><path d="M10,30V14L18,6V30Z" fill="#a8b4c0"/><path d="M14,16H26L30,20V30H14Z" fill="#fff" stroke="#222" stroke-width="1.3"/><path d="M17,22H23M17,26H27" stroke="#222" stroke-width="1.2"/></svg>
<div class="t" style="left:1354px;top:89px;font-size:12px;color:#3c3c50;"><div style="width:120px;text-align:center;transform:scaleX(.93)">Çelik</div></div>
<svg style="left:1409px;top:102px" width="10" height="10" viewBox="0 0 16 16"><path d="M4,6H12L8,10Z" fill="#777"/></svg>
<svg style="left:1460px;top:53px" width="32" height="32" viewBox="0 0 32 32"><rect x="1" y="1" width="28" height="28" fill="#555"/><rect x="4" y="4" width="22" height="22" fill="#e8e8e8"/><path d="M7,7L10,10M23,7L20,10" stroke="#444"/><path d="M14,16L28,30L31,27L17,13Z" fill="#e0a020" stroke="#8a5a10" stroke-width="0.6"/><path d="M14,16L13,12L17,13Z" fill="#f4d0a0"/></svg>
<div class="t" style="left:1416px;top:89px;font-size:12px;color:#3c3c50;"><div style="width:120px;text-align:center;transform:scaleX(.93)">Betonarme</div></div>
<svg style="left:1471px;top:102px" width="10" height="10" viewBox="0 0 16 16"><path d="M4,6H12L8,10Z" fill="#777"/></svg>
<svg style="left:1510px;top:53px" width="32" height="32" viewBox="0 0 32 32"><path d="M2,2H30V5H19V25H30V29H2V25H13V5H2Z" fill="#d8c060" stroke="#7a6a20" stroke-width="0.8"/><path d="M14,14L28,28L31,25L17,11Z" fill="#e0a020" stroke="#8a5a10" stroke-width="0.6"/></svg>
<div class="t" style="left:1466px;top:89px;font-size:12px;color:#3c3c50;"><div style="width:120px;text-align:center;transform:scaleX(.93)">Çelik</div></div>
<svg style="left:1521px;top:102px" width="10" height="10" viewBox="0 0 16 16"><path d="M4,6H12L8,10Z" fill="#777"/></svg>
<svg style="left:1563px;top:53px" width="32" height="32" viewBox="0 0 32 32"><g stroke="#444" stroke-width="0.8"><path d="M5,5L13,1L29,4L21,8Z" fill="#9a9a9a"/><path d="M5,16L13,12L29,15L21,19Z" fill="#8a8a8a"/><path d="M5,5V31M21,8V31M29,4V27M13,1V12" stroke="#666" stroke-width="3"/><path d="M5,5L21,8L29,4M5,16L21,19L29,15" fill="none" stroke="#555" stroke-width="1.6"/></g></svg>
<div class="t" style="left:1519px;top:89px;font-size:12px;color:#3c3c50;"><div style="width:120px;text-align:center;transform:scaleX(.93)">Katı</div></div>
<div class="t" style="left:1519px;top:102px;font-size:12px;color:#3c3c50;"><div style="width:120px;text-align:center;transform:scaleX(.93)">Model</div></div>
<svg style="left:1606px;top:53px" width="32" height="32" viewBox="0 0 32 32"><path d="M5,6L13,2L29,5L21,9Z" fill="#7ac0a0" stroke="#2a60b0" stroke-width="1"/><path d="M5,17L13,13L29,16L21,20Z" fill="#d8dcf4" stroke="#2a60b0" stroke-width="0.8"/><path d="M5,6V30M21,9V31M29,5V27M13,2V13" stroke="#2a60b0" stroke-width="1.3"/><circle cx="17" cy="6" r="0.9" fill="#e02020"/><g fill="#40c040"><circle cx="5" cy="30" r="1.2"/><circle cx="21" cy="31" r="1.2"/><circle cx="29" cy="27" r="1.2"/></g></svg>
<div class="t" style="left:1562px;top:89px;font-size:12px;color:#3c3c50;"><div style="width:120px;text-align:center;transform:scaleX(.93)">Analiz</div></div>
<div class="t" style="left:1562px;top:102px;font-size:12px;color:#3c3c50;"><div style="width:120px;text-align:center;transform:scaleX(.93)">Modeli</div></div>
<div class="a" style="left:1645px;top:57px;width:1px;height:58px;background:linear-gradient(rgba(180,186,196,0),#b4bac4 20%,#b4bac4 80%,rgba(180,186,196,0))"></div>
<svg style="left:1656px;top:53px" width="32" height="32" viewBox="0 0 32 32"><path d="M5,6L13,2L29,5L21,9Z" fill="none" stroke="#3a9a40" stroke-width="1.2"/><path d="M5,6L21,9V15L5,12Z" fill="#f4b860" stroke="#c08020" stroke-width="0.8"/><path d="M21,9L29,5V11L21,15Z" fill="#f8d090" stroke="#c08020" stroke-width="0.8"/><path d="M5,18L21,21V27L5,24Z" fill="#f4b860" stroke="#c08020" stroke-width="0.8"/><path d="M21,21L29,17V23L21,27Z" fill="#f8d090" stroke="#c08020" stroke-width="0.8"/><path d="M5,6V30M21,9V31M29,5V27" stroke="#2a60b0" stroke-width="1.2"/></svg>
<div class="t" style="left:1612px;top:89px;font-size:12px;color:#3c3c50;"><div style="width:120px;text-align:center;transform:scaleX(.93)">Duvar</div></div>
<svg style="left:1667px;top:102px" width="10" height="10" viewBox="0 0 16 16"><path d="M4,6H12L8,10Z" fill="#777"/></svg>
<div class="a" style="left:1695px;top:57px;width:1px;height:58px;background:linear-gradient(rgba(180,186,196,0),#b4bac4 20%,#b4bac4 80%,rgba(180,186,196,0))"></div>
<svg style="left:1705px;top:53px" width="32" height="32" viewBox="0 0 32 32"><g fill="none" stroke-width="1.8"><path d="M6,4Q10,16 5,30" stroke="#20a080"/><path d="M14,5Q18,17 13,31" stroke="#2080c0"/><path d="M22,5Q26,17 21,31" stroke="#20a080"/><path d="M28,4Q32,16 27,29" stroke="#2080c0"/><path d="M6,5Q16,2 28,5" stroke="#2080c0"/><path d="M8,17Q18,19 29,16" stroke="#a040c0" stroke-width="2.2"/></g></svg>
<div class="t" style="left:1661px;top:89px;font-size:12px;color:#3c3c50;"><div style="width:120px;text-align:center;transform:scaleX(.93)">Modal</div></div>
<svg style="left:1716px;top:102px" width="10" height="10" viewBox="0 0 16 16"><path d="M4,6H12L8,10Z" fill="#777"/></svg>
<svg style="left:1750px;top:53px" width="32" height="32" viewBox="0 0 32 32"><path d="M5,4V30M27,4V30" stroke="#2a60b0" stroke-width="1.6"/><path d="M5,5H27M5,18H27" stroke="#2060c0" stroke-width="1.4"/><path d="M7,5Q16,15 25,5Z" fill="#3070d0"/><path d="M7,18Q16,26 25,18Z" fill="#3070d0"/><path d="M5,5L1,10H5ZM27,5L31,10H27ZM5,18L1,22H5ZM27,18L31,22H27Z" fill="#e02020"/><path d="M3,30H7M25,30H29" stroke="#40c040" stroke-width="1.5"/></svg>
<div class="t" style="left:1706px;top:89px;font-size:12px;color:#3c3c50;"><div style="width:120px;text-align:center;transform:scaleX(.93)">Moment</div></div>
<div class="t" style="left:1706px;top:102px;font-size:12px;color:#3c3c50;"><div style="width:120px;text-align:center;transform:scaleX(.93)">3-3<svg width="9" height="6" style="position:static;display:inline-block;vertical-align:middle;margin-left:2px"><path d="M1,1H8L4.5,5Z" fill="#555"/></svg></div></div>
<svg style="left:1811px;top:53px" width="32" height="32" viewBox="0 0 32 32"><path d="M21,1L6,18H15L7,31L29,12H19L28,1Z" fill="#c8c850" stroke="#222" stroke-width="1.4"/><path d="M21,3L10,16" stroke="#f0f0a0" stroke-width="1.5"/></svg>
<div class="t" style="left:1767px;top:89px;font-size:12px;color:#3c3c50;"><div style="width:120px;text-align:center;transform:scaleX(.93)">Analiz</div></div>
<div class="t" style="left:1767px;top:102px;font-size:12px;color:#3c3c50;"><div style="width:120px;text-align:center;transform:scaleX(.93)">Tasarım<svg width="9" height="6" style="position:static;display:inline-block;vertical-align:middle;margin-left:2px"><path d="M1,1H8L4.5,5Z" fill="#555"/></svg></div></div>
<div class="a" style="left:4px;top:139px;width:1222px;height:23px;border-radius:3px;background:linear-gradient(#f3f4f7,#dfe3e9);border:1px solid #c4c9d1;border-top-color:#fafbfc"></div>
<div class="a" style="left:1214px;top:139px;width:11px;height:23px;border-radius:0 3px 3px 0;background:linear-gradient(#c6cbd3,#a9b0ba)"></div>
<div class="a" style="left:1226px;top:139px;width:316px;height:23px;border-radius:3px;background:linear-gradient(#f3f4f7,#dfe3e9);border:1px solid #c4c9d1;border-top-color:#fafbfc"></div>
<div class="a" style="left:1530px;top:139px;width:11px;height:23px;border-radius:0 3px 3px 0;background:linear-gradient(#c6cbd3,#a9b0ba)"></div>
<svg style="left:1215px;top:150px" width="8" height="8"><path d="M1,1H7" stroke="#555"/><path d="M1,4H7L4,7Z" fill="#555"/></svg>
<svg style="left:1531px;top:150px" width="8" height="8"><path d="M1,1H7" stroke="#555"/><path d="M1,4H7L4,7Z" fill="#555"/></svg>
<svg style="left:6px;top:143px" width="3" height="16"><g fill="#9aa2ae"><rect x="0" y="1" width="2" height="2"/><rect x="0" y="5" width="2" height="2"/><rect x="0" y="9" width="2" height="2"/><rect x="0" y="13" width="2" height="2"/></g></svg>
<svg style="left:1230px;top:143px" width="3" height="16"><g fill="#9aa2ae"><rect x="0" y="1" width="2" height="2"/><rect x="0" y="5" width="2" height="2"/><rect x="0" y="9" width="2" height="2"/><rect x="0" y="13" width="2" height="2"/></g></svg>
<div class="a" style="left:1484px;top:140px;width:22px;height:21px;border-radius:2px;background:linear-gradient(#fde7a8,#f7c65a);border:1px solid #d9a94a"></div>
<svg style="left:1487px;top:142px" width="16" height="16" viewBox="0 0 16 16"><rect x="1" y="2" width="14" height="12" fill="none" stroke="#333" stroke-width="1.1"/><path d="M1,6H15M6,2V14" stroke="#333"/><circle cx="11" cy="11" r="3" fill="#e02020"/></svg>
<svg style="left:12px;top:142px" width="16" height="16" viewBox="0 0 16 16"><circle cx="6.5" cy="6.5" r="5" fill="none" stroke="#1f3346" stroke-width="1.4"/><rect x="3.5" y="4.5" width="6" height="4" fill="none" stroke="#1f3346" stroke-width="1.2"/><line x1="10" y1="10" x2="14.5" y2="14.5" stroke="#1f3346" stroke-width="2"/></svg>
<svg style="left:34px;top:142px" width="16" height="16" viewBox="0 0 16 16"><path d="M1,5V1H5M11,1H15V5M15,11V15H11M5,15H1V11" fill="none" stroke="#1f3346" stroke-width="1.4"/><circle cx="7" cy="7" r="3" fill="#fff" stroke="#1f3346" stroke-width="1.2"/><line x1="9" y1="9" x2="12" y2="12" stroke="#1f3346" stroke-width="1.2"/></svg>
<svg style="left:64px;top:142px" width="16" height="16" viewBox="0 0 16 16"><rect x="1" y="1" width="3" height="14" fill="#6a88a8" stroke="#1f3346" stroke-width="0.8"/><path d="M5,2L10,8M5,14L12,8" stroke="#888" stroke-width="0.6"/><path d="M7,13L14,3" stroke="#1f3346" stroke-width="2.2"/></svg>
<svg style="left:87px;top:142px" width="16" height="16" viewBox="0 0 16 16"><path d="M2,14L11,5" stroke="#1f3346" stroke-width="1.5"/><circle cx="12" cy="4" r="2.8" fill="#2e4a6a"/><rect x="1" y="13" width="2" height="2" fill="#888"/></svg>
<svg style="left:110px;top:142px" width="16" height="16" viewBox="0 0 16 16"><rect x="7" y="2" width="8" height="6" fill="#ff0" stroke="#1f3346" stroke-width="1"/><path d="M7,7H3V13M1,11L3,14L5,11" fill="none" stroke="#1f3346" stroke-width="1.2"/></svg>
<svg style="left:138px;top:142px" width="16" height="16" viewBox="0 0 16 16"><path d="M2,15L8,1L14,15M5,9H11" fill="none" stroke="#1f3346" stroke-width="1.5"/><circle cx="8" cy="11" r="1" fill="#0cc"/></svg>
<svg style="left:161px;top:142px" width="16" height="16" viewBox="0 0 16 16"><path d="M1,9L11,2L15,12L11,15Z" fill="none" stroke="#1f3346" stroke-width="1.3"/><circle cx="11" cy="2" r="1" fill="#0cc"/></svg>
<svg style="left:190px;top:142px" width="16" height="16" viewBox="0 0 16 16"><path d="M8,1V15M1,8H15M8,1L5.5,4M8,1L10.5,4M8,15L5.5,12M8,15L10.5,12M1,8L4,5.5M1,8L4,10.5M15,8L12,5.5M15,8L12,10.5" fill="none" stroke="#111" stroke-width="1.6"/></svg>
<svg style="left:212px;top:142px" width="16" height="16" viewBox="0 0 16 16"><path d="M8,1V15M1,8H15" stroke="#aab" stroke-width="1.4"/><rect x="4" y="5" width="8" height="6" fill="none" stroke="#aab"/></svg>
<svg style="left:234px;top:142px" width="16" height="16" viewBox="0 0 16 16"><path d="M13,8A5,5 0 1 1 8,3" fill="none" stroke="#111" stroke-width="2"/><path d="M7,0L11,3L7,6Z" fill="#111"/></svg>
<svg style="left:256px;top:142px" width="16" height="16" viewBox="0 0 16 16"><path d="M8,2V14M3,12L7,4V12ZM13,12L9,4V12Z" fill="none" stroke="#1f3346" stroke-width="1.2"/><ellipse cx="8" cy="10" rx="6" ry="2" fill="none" stroke="#5ab" stroke-width="0.8"/></svg>
<svg style="left:278px;top:142px" width="16" height="16" viewBox="0 0 16 16"><path d="M8,1V15M6,14L1,14L6,3ZM10,14H15L10,3Z" fill="none" stroke="#1f3346" stroke-width="1.3"/></svg>
<svg style="left:300px;top:142px" width="16" height="16" viewBox="0 0 16 16"><rect x="2" y="2" width="12" height="3" fill="#345"/><rect x="2" y="12" width="12" height="3" fill="#345"/><rect x="5" y="5" width="6" height="7" fill="#567"/><line x1="8" y1="0" x2="8" y2="16" stroke="#e00" stroke-width="1.2"/></svg>
<svg style="left:322px;top:142px" width="16" height="16" viewBox="0 0 16 16"><g fill="#6a88aa"><rect x="1" y="1" width="4" height="4"/><rect x="11" y="1" width="4" height="4"/><rect x="1" y="11" width="4" height="4"/><rect x="11" y="11" width="4" height="4"/><rect x="6" y="1" width="4" height="3"/><rect x="1" y="6" width="3" height="4"/></g><path d="M8,3V13M3,8H13" stroke="#e00" stroke-width="1.4"/></svg>
<svg style="left:352px;top:142px" width="16" height="16" viewBox="0 0 16 16"><path d="M1,12L15,4" stroke="#1f3346" stroke-width="1.4"/><path d="M8,2V14" stroke="#1f3346" stroke-width="1.2"/><path d="M10,8H15" stroke="#c00" stroke-width="1.4" stroke-dasharray="1.5,1"/></svg>
<svg style="left:374px;top:142px" width="16" height="16" viewBox="0 0 16 16"><path d="M1,7H8" stroke="#1f3346" stroke-width="1.6" stroke-dasharray="3,1.5"/><path d="M9,14L15,2" stroke="#1f3346" stroke-width="1.4"/></svg>
<svg style="left:397px;top:142px" width="16" height="16" viewBox="0 0 16 16"><path d="M3,12C0,12 0,8 3,8C3,4 7,3 8,5C10,2 14,4 13,8C16,8 16,12 13,12Z" fill="none" stroke="#8a1010" stroke-width="1.4"/><path d="M3,14H13" stroke="#8a1010" stroke-width="1.2"/></svg>
<svg style="left:419px;top:142px" width="16" height="16" viewBox="0 0 16 16"><rect x="5" y="7" width="3" height="8" fill="#124"/><rect x="9" y="4" width="3" height="11" fill="#c00"/><rect x="12" y="2" width="2" height="13" fill="#124"/><path d="M1,15H15" stroke="#124"/><text x="1" y="6" font-size="6" fill="#124">1</text></svg>
<svg style="left:441px;top:142px" width="16" height="16" viewBox="0 0 16 16"><path d="M8,1V6M8,10V15M1,8H6M10,8H15" stroke="#1f3346" stroke-width="1.4"/><circle cx="8" cy="8" r="1.2" fill="#c00"/></svg>
<svg style="left:463px;top:142px" width="16" height="16" viewBox="0 0 16 16"><path d="M2,2L14,14M14,2L2,14" stroke="#1f3346" stroke-width="1.4"/></svg>
<svg style="left:484px;top:142px" width="16" height="16" viewBox="0 0 16 16"><path d="M1,8H15" stroke="#1f3346" stroke-width="1.5"/><path d="M6,5L10,11M10,5L6,11" stroke="#0bb" stroke-width="1.1"/></svg>
<svg style="left:506px;top:142px" width="16" height="16" viewBox="0 0 16 16"><path d="M2,15V7A6,6 0 0 1 8,2H15" fill="none" stroke="#1f3346" stroke-width="1.6"/><path d="M2,5L5,2" stroke="#888" stroke-dasharray="1,1"/></svg>
<svg style="left:528px;top:142px" width="16" height="16" viewBox="0 0 16 16"><path d="M2,15V7L7,2H15" fill="none" stroke="#1f3346" stroke-width="1.6"/><path d="M2,4L5,1" stroke="#888" stroke-dasharray="1,1"/></svg>
<svg style="left:550px;top:142px" width="16" height="16" viewBox="0 0 16 16"><rect x="1" y="1" width="14" height="14" fill="none" stroke="#1f3346" stroke-width="1.4"/><rect x="3" y="3" width="3" height="3" fill="none" stroke="#1f3346"/><rect x="10" y="10" width="3" height="3" fill="none" stroke="#1f3346"/><path d="M4.5,6V11.5H10" stroke="#1f3346" stroke-width="0.8"/></svg>
<svg style="left:572px;top:142px" width="16" height="16" viewBox="0 0 16 16"><path d="M2,14L11,5L13,7L4,16Z" fill="#d02020" stroke="#700" stroke-width="0.8"/><path d="M12,4L15,1M13,3L15,3M12,2L12,0" stroke="#caa" stroke-width="1"/></svg>
<svg style="left:602px;top:142px" width="16" height="16" viewBox="0 0 16 16"><path d="M3,2V14M13,2V14M1,4H15M1,12H15" stroke="#1f3346" stroke-width="1.2" stroke-dasharray="2,1"/><g fill="#1f3346"><circle cx="3" cy="4" r="1.3"/><circle cx="13" cy="4" r="1.3"/><circle cx="3" cy="12" r="1.3"/><circle cx="13" cy="12" r="1.3"/></g></svg>
<svg style="left:624px;top:142px" width="16" height="16" viewBox="0 0 16 16"><rect x="2" y="1" width="12" height="14" fill="#5a86aa" stroke="#1f3346" stroke-width="1.2"/><rect x="3" y="2" width="10" height="3" fill="#9bc"/></svg>
<svg style="left:646px;top:142px" width="16" height="16" viewBox="0 0 16 16"><path d="M4,1V15M8,1V15M12,1V15M1,4H15M1,8H15M1,12H15" stroke="#2d5a85" stroke-width="1.8"/></svg>
<svg style="left:676px;top:142px" width="16" height="16" viewBox="0 0 16 16"><rect x="1" y="2" width="14" height="12" fill="#cdd8e4" stroke="#345" stroke-width="1"/><path d="M2,13L7,8L10,11L12,9L14,13Z" fill="#456"/><rect x="9" y="4" width="3" height="3" fill="#d93"/></svg>
<svg style="left:698px;top:142px" width="16" height="16" viewBox="0 0 16 16"><text x="8" y="15" font-family="Liberation Serif" font-weight="bold" font-size="16" text-anchor="middle" fill="#2d4a70">A</text></svg>
<svg style="left:720px;top:142px" width="16" height="16" viewBox="0 0 16 16"><path d="M1,10L5,4L9,11L12,8L15,10" fill="none" stroke="#345" stroke-width="1.3"/></svg>
<svg style="left:742px;top:142px" width="16" height="16" viewBox="0 0 16 16"><path d="M2,14Q5,3 14,2" fill="none" stroke="#345" stroke-width="1.3"/><circle cx="2" cy="14" r="1.2" fill="#345"/><circle cx="14" cy="2" r="1.2" fill="#345"/></svg>
<svg style="left:764px;top:142px" width="16" height="16" viewBox="0 0 16 16"><circle cx="8" cy="8" r="6.5" fill="none" stroke="#234" stroke-width="1.3"/></svg>
<svg style="left:786px;top:142px" width="16" height="16" viewBox="0 0 16 16"><path d="M2,4Q4,1 6,3Q8,1 10,3Q12,1 14,4Q16,8 14,12Q12,15 10,13Q8,15 6,13Q4,15 2,12Q0,8 2,4Z" fill="none" stroke="#234" stroke-width="1.3"/></svg>
<svg style="left:808px;top:142px" width="16" height="16" viewBox="0 0 16 16"><path d="M1,15L8,3L15,13V15Z" fill="#345"/><path d="M3,14L8,6L13,14" fill="#9ab"/></svg>
<svg style="left:830px;top:142px" width="16" height="16" viewBox="0 0 16 16"><path d="M1,4L5,12L8,6L11,14L15,5" fill="none" stroke="#2d6a88" stroke-width="1.1" stroke-dasharray="2,1"/></svg>
<svg style="left:852px;top:142px" width="16" height="16" viewBox="0 0 16 16"><text x="1" y="12" font-size="9" fill="#234">+2</text><path d="M11,4V11H15" fill="none" stroke="#234" stroke-width="1.2"/></svg>
<svg style="left:874px;top:142px" width="16" height="16" viewBox="0 0 16 16"><text x="0" y="12" font-size="10" fill="#222">?</text><path d="M7,2Q5,8 7,14" fill="none" stroke="#222" stroke-width="1.2"/><rect x="10" y="1" width="4" height="14" fill="#222"/><rect x="11" y="2" width="2" height="12" fill="#ee0"/></svg>
<svg style="left:896px;top:142px" width="16" height="16" viewBox="0 0 16 16"><rect x="1" y="1" width="14" height="14" fill="none" stroke="#345" stroke-width="1.2"/><text x="3" y="13" font-size="9" fill="#345">m</text><text x="10" y="7" font-size="5" fill="#345">2</text></svg>
<svg style="left:918px;top:142px" width="16" height="16" viewBox="0 0 16 16"><path d="M1,14L13,2M1,14H15" stroke="#345" stroke-width="1.2"/><text x="8" y="11" font-size="8" fill="#345">?</text></svg>
<svg style="left:940px;top:142px" width="16" height="16" viewBox="0 0 16 16"><rect x="1" y="1" width="14" height="14" fill="none" stroke="#345" stroke-width="1.2"/><text x="2" y="8" font-size="6" fill="#345">mm²</text><g fill="none" stroke="#345" stroke-width="0.9"><circle cx="4.5" cy="11.5" r="1.3"/><circle cx="8" cy="11.5" r="1.3"/><circle cx="11.5" cy="11.5" r="1.3"/></g></svg>
<svg style="left:970px;top:142px" width="16" height="16" viewBox="0 0 16 16"><path d="M1,7H7M9,10H15" stroke="#234" stroke-width="1.5"/><path d="M10,7L12,4L14,7Z" fill="#234"/><path d="M3,10L5,7L7,10Z" fill="#234"/></svg>
<svg style="left:992px;top:142px" width="16" height="16" viewBox="0 0 16 16"><path d="M1,8Q8,1 15,8Q8,14 1,8Z" fill="#ccc" stroke="#333" stroke-width="1"/><circle cx="8" cy="8" r="2.5" fill="#333"/><path d="M1,14H15" stroke="#111" stroke-width="1.4"/></svg>
<svg style="left:1022px;top:142px" width="16" height="16" viewBox="0 0 16 16"><path d="M1,5L5,1H15V15H1Z" fill="#fff" stroke="#234" stroke-width="1.3"/><path d="M5,1V5H1" fill="none" stroke="#234"/></svg>
<svg style="left:1044px;top:142px" width="16" height="16" viewBox="0 0 16 16"><rect x="1" y="1" width="14" height="14" fill="#fff" stroke="#234" stroke-width="1.3"/><rect x="8" y="2" width="6" height="5" fill="#456"/><rect x="2" y="8" width="5" height="6" fill="#456"/><rect x="8" y="8" width="6" height="6" fill="#456"/></svg>
<svg style="left:1074px;top:142px" width="16" height="16" viewBox="0 0 16 16"><path d="M4,15V4H1L6,0L11,4H8V11H15" fill="none" stroke="#234" stroke-width="1.3"/></svg>
<svg style="left:1096px;top:142px" width="16" height="16" viewBox="0 0 16 16"><path d="M2,14L14,2M2,2V14H14" fill="none" stroke="#345" stroke-width="1" stroke-dasharray="1.5,1"/></svg>
<svg style="left:1126px;top:142px" width="16" height="16" viewBox="0 0 16 16"><path d="M1,2V15H15" fill="none" stroke="#234" stroke-width="1.3"/><text x="4" y="14" font-size="8" font-weight="bold" fill="#a01010">XY</text></svg>
<svg style="left:1148px;top:142px" width="16" height="16" viewBox="0 0 16 16"><path d="M1,2V15H15" fill="none" stroke="#234" stroke-width="1.3"/><text x="6" y="14" font-size="9" font-weight="bold" fill="#a01010">Z</text></svg>
<svg style="left:1170px;top:142px" width="16" height="16" viewBox="0 0 16 16"><path d="M1,2V15H15" fill="none" stroke="#234" stroke-width="1.3"/><text x="3" y="14" font-size="8" font-weight="bold" fill="#a01010">3P</text></svg>
<svg style="left:1192px;top:142px" width="16" height="16" viewBox="0 0 16 16"><path d="M1,2V15H15" fill="none" stroke="#234" stroke-width="1.3"/><circle cx="9" cy="9" r="4" fill="none" stroke="#a01010" stroke-width="1.2"/><path d="M9,4V14M4,9H14" stroke="#a01010"/></svg>
<svg style="left:1237px;top:142px" width="16" height="16" viewBox="0 0 16 16"><rect x="4" y="1" width="8" height="14" rx="4" fill="#f0e030" stroke="#555" stroke-width="1"/><rect x="6" y="4" width="4" height="8" rx="2" fill="#ff6"/></svg>
<svg style="left:1259px;top:142px" width="16" height="16" viewBox="0 0 16 16"><path d="M1,15V12H4V9H7V6H10V3H13V1" fill="none" stroke="#222" stroke-width="2"/><path d="M3,15V13H6V10H9V7H12V4H15" fill="none" stroke="#ee0" stroke-width="1.5"/></svg>
<svg style="left:1281px;top:142px" width="16" height="16" viewBox="0 0 16 16"><path d="M1,12A7,7 0 0 1 15,12Z" fill="#d8c020" stroke="#333" stroke-width="1"/><path d="M4,12V8M8,12V5M12,12V8" stroke="#333" stroke-width="0.8"/></svg>
<svg style="left:1303px;top:142px" width="16" height="16" viewBox="0 0 16 16"><path d="M6,2V12M6,6L10,10M2,14H12" stroke="#a8a020" stroke-width="1.5"/><path d="M4,5L8,3" stroke="#e0d020" stroke-width="2"/></svg>
<svg style="left:1325px;top:142px" width="16" height="16" viewBox="0 0 16 16"><path d="M10,1V12H2V15H13V1Z" fill="#a89c30" stroke="#666" stroke-width="0.6"/></svg>
<svg style="left:1347px;top:142px" width="16" height="16" viewBox="0 0 16 16"><path d="M1,3H11L15,8L11,13H1Z" fill="#2a70b8"/></svg>
<svg style="left:1369px;top:142px" width="16" height="16" viewBox="0 0 16 16"><path d="M1,1V15H15" fill="none" stroke="#234" stroke-width="1.2"/><path d="M3,12Q7,4 14,9" fill="none" stroke="#c02020" stroke-width="0.9" stroke-dasharray="1.5,1"/></svg>
<svg style="left:1391px;top:142px" width="16" height="16" viewBox="0 0 16 16"><path d="M1,1V15H15" fill="none" stroke="#234" stroke-width="1.2"/><path d="M3,13L11,3" stroke="#234" stroke-dasharray="1.5,1"/><text x="9" y="14" font-size="8" fill="#234">P</text><circle cx="11" cy="3" r="1.2" fill="#c00"/></svg>
<svg style="left:1413px;top:142px" width="16" height="16" viewBox="0 0 16 16"><path d="M1,1V15H15" fill="none" stroke="#234" stroke-width="1.2"/><path d="M3,13L11,3" stroke="#234" stroke-dasharray="1.5,1"/><text x="9" y="13" font-size="9" fill="#234">?</text></svg>
<svg style="left:1435px;top:142px" width="16" height="16" viewBox="0 0 16 16"><path d="M1,1V15H15" fill="none" stroke="#234" stroke-width="1.2"/><path d="M2,14L5,3L8,10L15,12" fill="none" stroke="#20a040" stroke-width="1.2"/><path d="M2,14L5,5L9,12L15,13" fill="none" stroke="#c02020" stroke-width="1"/></svg>
<svg style="left:1457px;top:142px" width="16" height="16" viewBox="0 0 16 16"><path d="M9,0L2,9H7L5,16L14,6H9L12,0Z" fill="#e8e040" stroke="#444" stroke-width="0.8"/></svg>
<svg style="left:1510px;top:142px" width="16" height="16" viewBox="0 0 16 16"><rect x="1" y="2" width="14" height="12" fill="none" stroke="#222" stroke-width="1.2"/><path d="M1,6H15M1,10H15M6,2V14M11,6V14" stroke="#222"/></svg>
<div class="a" style="left:58px;top:143px;width:1px;height:15px;background:#b0b6c0"></div>
<div class="a" style="left:132px;top:143px;width:1px;height:15px;background:#b0b6c0"></div>
<div class="a" style="left:184px;top:143px;width:1px;height:15px;background:#b0b6c0"></div>
<div class="a" style="left:346px;top:143px;width:1px;height:15px;background:#b0b6c0"></div>
<div class="a" style="left:596px;top:143px;width:1px;height:15px;background:#b0b6c0"></div>
<div class="a" style="left:669px;top:143px;width:1px;height:15px;background:#b0b6c0"></div>
<div class="a" style="left:964px;top:143px;width:1px;height:15px;background:#b0b6c0"></div>
<div class="a" style="left:1016px;top:143px;width:1px;height:15px;background:#b0b6c0"></div>
<div class="a" style="left:1067px;top:143px;width:1px;height:15px;background:#b0b6c0"></div>
<div class="a" style="left:1119px;top:143px;width:1px;height:15px;background:#b0b6c0"></div>
<div class="a" style="left:1480px;top:143px;width:1px;height:15px;background:#b0b6c0"></div>
<svg style="left:50px;top:164px" width="898" height="780" viewBox="50 164 898 780"><rect x="50" y="164" width="898" height="780" fill="#fff"/><line x1="94.5" y1="164" x2="94.5" y2="944" stroke="#dcdcea" stroke-width="1"/><line x1="182.5" y1="164" x2="182.5" y2="944" stroke="#dcdcea" stroke-width="1"/><line x1="269.5" y1="164" x2="269.5" y2="944" stroke="#dcdcea" stroke-width="1"/><line x1="356.5" y1="164" x2="356.5" y2="944" stroke="#dcdcea" stroke-width="1"/><line x1="443.5" y1="164" x2="443.5" y2="944" stroke="#dcdcea" stroke-width="1"/><line x1="531.5" y1="164" x2="531.5" y2="944" stroke="#dcdcea" stroke-width="1"/><line x1="618.5" y1="164" x2="618.5" y2="944" stroke="#dcdcea" stroke-width="1"/><line x1="705.5" y1="164" x2="705.5" y2="944" stroke="#dcdcea" stroke-width="1"/><line x1="880.5" y1="164" x2="880.5" y2="944" stroke="#dcdcea" stroke-width="1"/><line x1="50" y1="182.5" x2="948" y2="182.5" stroke="#dcdcea" stroke-width="1"/><line x1="50" y1="269.5" x2="948" y2="269.5" stroke="#dcdcea" stroke-width="1"/><line x1="50" y1="357.5" x2="948" y2="357.5" stroke="#dcdcea" stroke-width="1"/><line x1="50" y1="444.5" x2="948" y2="444.5" stroke="#dcdcea" stroke-width="1"/><line x1="50" y1="531.5" x2="948" y2="531.5" stroke="#dcdcea" stroke-width="1"/><line x1="50" y1="618.5" x2="948" y2="618.5" stroke="#dcdcea" stroke-width="1"/><line x1="50" y1="706.5" x2="948" y2="706.5" stroke="#dcdcea" stroke-width="1"/><line x1="50" y1="880.5" x2="948" y2="880.5" stroke="#dcdcea" stroke-width="1"/><line x1="792.5" y1="164" x2="792.5" y2="793.5" stroke="#a0a0a8" stroke-width="1"/><line x1="792.5" y1="793.5" x2="792.5" y2="944" stroke="#dcdcea" stroke-width="1"/><line x1="50" y1="793.5" x2="792.5" y2="793.5" stroke="#a0a0a8" stroke-width="1"/><line x1="792.5" y1="793.5" x2="948" y2="793.5" stroke="#dcdcea" stroke-width="1"/><defs><pattern id="hb" width="5" height="5" patternUnits="userSpaceOnUse" patternTransform="rotate(45)"><rect width="5" height="5" fill="#f4f4f4"/><line x1="0" y1="0" x2="0" y2="5" stroke="#c8c8c8" stroke-width="1"/></pattern><pattern id="hc" width="5" height="5" patternUnits="userSpaceOnUse" patternTransform="rotate(45)"><rect width="5" height="5" fill="#aaaacc"/><line x1="0" y1="0" x2="0" y2="5" stroke="#9494bb" stroke-width="1"/></pattern></defs><rect x="191" y="526.5" width="252.5" height="11" fill="url(#hb)" stroke="#2e2470" stroke-width="1.3"/><rect x="628" y="526.5" width="252.5" height="11" fill="url(#hb)" stroke="#2e2470" stroke-width="1.3"/><rect x="172.5" y="522.5" width="19.0" height="18" fill="url(#hc)" stroke="#2e2a80" stroke-width="1.3"/><rect x="180.5" y="530" width="3" height="3" fill="none" stroke="#b040d0" stroke-width="0.8"/><rect x="346.5" y="522.5" width="19.5" height="18" fill="url(#hc)" stroke="#2e2a80" stroke-width="1.3"/><rect x="354.75" y="530" width="3" height="3" fill="none" stroke="#b040d0" stroke-width="0.8"/><rect x="608.5" y="522.5" width="19.5" height="18" fill="url(#hc)" stroke="#2e2a80" stroke-width="1.3"/><rect x="616.75" y="530" width="3" height="3" fill="none" stroke="#b040d0" stroke-width="0.8"/><rect x="783" y="522.5" width="19.5" height="18" fill="url(#hc)" stroke="#2e2a80" stroke-width="1.3"/><rect x="791.25" y="530" width="3" height="3" fill="none" stroke="#b040d0" stroke-width="0.8"/><circle cx="443.5" cy="531.5" r="1.5" fill="#a040c0"/><circle cx="880.5" cy="531.5" r="1.5" fill="#a040c0"/><text x="141" y="520" font-family="Liberation Sans" font-size="7.5" fill="#404040">S04</text><text x="316" y="520" font-family="Liberation Sans" font-size="7.5" fill="#404040">S05</text><text x="578" y="520" font-family="Liberation Sans" font-size="7.5" fill="#404040">S06</text><text x="752" y="520" font-family="Liberation Sans" font-size="7.5" fill="#404040">S07</text><text x="194" y="520" font-family="Liberation Sans" font-size="7.3" fill="#404040">45/40</text><text x="368" y="520" font-family="Liberation Sans" font-size="7.3" fill="#404040">45/40</text><text x="630" y="520" font-family="Liberation Sans" font-size="7.3" fill="#404040">45/40</text><text x="804" y="520" font-family="Liberation Sans" font-size="7.3" fill="#404040">45/40</text><text x="200" y="534.5" font-family="Liberation Sans" font-size="9" fill="#505050">K04 25/50</text><text x="637" y="534.5" font-family="Liberation Sans" font-size="9" fill="#505050">K05 25/50</text><text x="811" y="534.5" font-family="Liberation Sans" font-size="9" fill="#505050">K06 25/50</text></svg>
<div class="a" style="left:50px;top:163px;width:898px;height:1px;background:#a8acb4"></div>
<div class="a" style="left:50px;top:943px;width:898px;height:1px;background:#a8acb4"></div>
<div class="a" style="left:929px;top:165px;width:18px;height:16px;background:#d4d4d4;border:1px solid #222;border-top-color:#fff;border-left-color:#fff;box-shadow:0 0 0 1px #333"></div>
<svg style="left:929px;top:165px" width="18" height="16"><polyline points="3.5,12 9,3 14.5,12" fill="none" stroke="#222" stroke-width="1.2"/></svg>
<div class="a" style="left:948px;top:163px;width:3px;height:781px;background:#b4b9c2"></div>
<div class="a" style="left:949px;top:163px;width:1px;height:781px;background:#e8ebf0"></div>
<svg style="left:951px;top:164px" width="890" height="780" viewBox="951 164 890 780"><rect x="951" y="164" width="890" height="780" fill="#fdfdfe"/><g stroke="#d8d8e8" stroke-width="1" fill="none"><line x1="28788.3" y1="15569.8" x2="17464.3" y2="912.7" /><line x1="-107128.6" y1="15983.1" x2="13306.3" y2="767.0" /><line x1="-243045.5" y1="16396.5" x2="10856.0" y2="681.1" /><line x1="-378962.4" y1="16809.8" x2="9240.6" y2="624.5" /><line x1="-25855.7" y1="1413.6" x2="7241.4" y2="554.5" /><line x1="-16098.7" y1="1032.1" x2="6579.9" y2="531.3" /><line x1="-11489.4" y1="851.9" x2="6052.5" y2="512.8" /><line x1="-8804.3" y1="746.9" x2="5622.1" y2="497.7" /><line x1="-7046.6" y1="678.1" x2="5264.2" y2="485.2" /><line x1="-5806.5" y1="629.7" x2="4962.0" y2="474.6" /><line x1="-4884.8" y1="593.6" x2="4703.3" y2="465.5" /><line x1="-4172.8" y1="565.8" x2="4479.4" y2="457.7" /><line x1="-3606.3" y1="543.6" x2="4283.8" y2="450.8" /><line x1="-3144.7" y1="525.6" x2="4111.3" y2="444.8" /><line x1="-2761.4" y1="510.6" x2="3958.1" y2="439.4" /><line x1="-2438.1" y1="497.9" x2="3821.2" y2="434.6" /><line x1="-2161.6" y1="487.1" x2="3698.1" y2="430.3" /><line x1="-1922.6" y1="477.8" x2="3586.7" y2="426.4" /><line x1="-1713.8" y1="469.6" x2="3485.6" y2="422.8" /><line x1="-1529.9" y1="462.4" x2="3393.2" y2="419.6" /><line x1="-1366.6" y1="456.0" x2="3308.7" y2="416.6" /><line x1="-1220.8" y1="450.3" x2="3230.9" y2="413.9" /><line x1="-1089.6" y1="445.2" x2="3159.1" y2="411.4" /><line x1="-971.1" y1="440.6" x2="3092.7" y2="409.1" /><line x1="-863.5" y1="436.4" x2="3031.0" y2="406.9" /><line x1="-765.3" y1="432.5" x2="2973.7" y2="404.9" /><line x1="-675.4" y1="429.0" x2="2920.1" y2="403.0" /><line x1="-592.7" y1="425.8" x2="2870.0" y2="401.3" /><line x1="-516.4" y1="422.8" x2="2823.1" y2="399.6" /><line x1="-445.8" y1="420.0" x2="2779.0" y2="398.1" /><line x1="-380.3" y1="417.5" x2="2737.6" y2="396.6" /><line x1="-319.4" y1="415.1" x2="2698.5" y2="395.3" /><line x1="-262.5" y1="412.9" x2="2661.6" y2="394.0" /><line x1="-209.4" y1="410.8" x2="2626.6" y2="392.7" /><line x1="-159.6" y1="408.8" x2="2593.6" y2="391.6" /><line x1="-112.8" y1="407.0" x2="2562.2" y2="390.5" /><line x1="-68.8" y1="405.3" x2="2532.4" y2="389.4" /><line x1="-27.3" y1="403.7" x2="2504.1" y2="388.4" /><line x1="11.9" y1="402.1" x2="2477.1" y2="387.5" /><line x1="48.9" y1="400.7" x2="2451.4" y2="386.6" /><line x1="84.0" y1="399.3" x2="2426.8" y2="385.7" /><line x1="117.2" y1="398.0" x2="2403.4" y2="384.9" /><line x1="148.8" y1="396.8" x2="2380.9" y2="384.1" /><line x1="178.9" y1="395.6" x2="2359.5" y2="383.4" /><line x1="207.5" y1="394.5" x2="2338.9" y2="382.7" /><line x1="234.8" y1="393.4" x2="2319.1" y2="382.0" /><line x1="260.8" y1="392.4" x2="2300.2" y2="381.3" /><line x1="285.6" y1="391.4" x2="2282.0" y2="380.7" /><line x1="309.4" y1="390.5" x2="2264.5" y2="380.0" /><line x1="332.2" y1="389.6" x2="2247.7" y2="379.5" /><line x1="354.0" y1="388.8" x2="2231.4" y2="378.9" /><line x1="374.9" y1="387.9" x2="2215.8" y2="378.3" /><line x1="395.0" y1="387.1" x2="2200.8" y2="377.8" /><line x1="414.3" y1="386.4" x2="2186.2" y2="377.3" /><line x1="432.8" y1="385.7" x2="2172.2" y2="376.8" /><line x1="450.6" y1="385.0" x2="2158.7" y2="376.3" /><line x1="467.8" y1="384.3" x2="2145.6" y2="375.9" /><line x1="-423010.5" y1="16943.8" x2="467.8" y2="384.3" /><line x1="-417846.7" y1="16928.1" x2="479.5" y2="384.2" /><line x1="-412683.0" y1="16912.4" x2="491.1" y2="384.2" /><line x1="-407519.2" y1="16896.7" x2="502.7" y2="384.1" /><line x1="-402355.4" y1="16881.0" x2="514.4" y2="384.1" /><line x1="-397191.7" y1="16865.3" x2="526.0" y2="384.0" /><line x1="-392027.9" y1="16849.6" x2="537.5" y2="384.0" /><line x1="-386864.1" y1="16833.9" x2="549.1" y2="383.9" /><line x1="-381700.4" y1="16818.2" x2="560.6" y2="383.8" /><line x1="-376536.6" y1="16802.5" x2="572.2" y2="383.8" /><line x1="-371372.8" y1="16786.7" x2="583.7" y2="383.7" /><line x1="-366209.1" y1="16771.0" x2="595.2" y2="383.7" /><line x1="-361045.3" y1="16755.3" x2="606.7" y2="383.6" /><line x1="-355881.5" y1="16739.6" x2="618.1" y2="383.5" /><line x1="-350717.8" y1="16723.9" x2="629.6" y2="383.5" /><line x1="-345554.0" y1="16708.2" x2="641.0" y2="383.4" /><line x1="-340390.2" y1="16692.5" x2="652.5" y2="383.4" /><line x1="-335226.5" y1="16676.8" x2="663.9" y2="383.3" /><line x1="-330062.7" y1="16661.1" x2="675.2" y2="383.3" /><line x1="-324898.9" y1="16645.4" x2="686.6" y2="383.2" /><line x1="-319735.2" y1="16629.7" x2="698.0" y2="383.1" /><line x1="-314571.4" y1="16614.0" x2="709.3" y2="383.1" /><line x1="-309407.6" y1="16598.3" x2="720.6" y2="383.0" /><line x1="-304243.9" y1="16582.6" x2="731.9" y2="383.0" /><line x1="-299080.1" y1="16566.9" x2="743.2" y2="382.9" /><line x1="-293916.3" y1="16551.2" x2="754.5" y2="382.9" /><line x1="-288752.6" y1="16535.5" x2="765.8" y2="382.8" /><line x1="-283588.8" y1="16519.8" x2="777.0" y2="382.7" /><line x1="-278425.0" y1="16504.1" x2="788.3" y2="382.7" /><line x1="-273261.3" y1="16488.4" x2="799.5" y2="382.6" /><line x1="-268097.5" y1="16472.7" x2="810.7" y2="382.6" /><line x1="-262933.7" y1="16457.0" x2="821.9" y2="382.5" /><line x1="-257770.0" y1="16441.3" x2="833.0" y2="382.5" /><line x1="-252606.2" y1="16425.6" x2="844.2" y2="382.4" /><line x1="-247442.4" y1="16409.9" x2="855.3" y2="382.4" /><line x1="-242278.7" y1="16394.1" x2="866.4" y2="382.3" /><line x1="-237114.9" y1="16378.4" x2="877.5" y2="382.2" /><line x1="-231951.1" y1="16362.7" x2="888.6" y2="382.2" /><line x1="-226787.4" y1="16347.0" x2="899.7" y2="382.1" /><line x1="-221623.6" y1="16331.3" x2="910.8" y2="382.1" /><line x1="-216459.8" y1="16315.6" x2="921.8" y2="382.0" /><line x1="-211296.1" y1="16299.9" x2="932.8" y2="382.0" /><line x1="-206132.3" y1="16284.2" x2="943.9" y2="381.9" /><line x1="-200968.5" y1="16268.5" x2="954.9" y2="381.9" /><line x1="-195804.8" y1="16252.8" x2="965.8" y2="381.8" /><line x1="-190641.0" y1="16237.1" x2="976.8" y2="381.7" /><line x1="-185477.2" y1="16221.4" x2="987.8" y2="381.7" /><line x1="-180313.5" y1="16205.7" x2="998.7" y2="381.6" /><line x1="-175149.7" y1="16190.0" x2="1009.6" y2="381.6" /><line x1="-169985.9" y1="16174.3" x2="1020.5" y2="381.5" /><line x1="-164822.2" y1="16158.6" x2="1031.4" y2="381.5" /><line x1="-159658.4" y1="16142.9" x2="1042.3" y2="381.4" /><line x1="-154494.6" y1="16127.2" x2="1053.2" y2="381.4" /><line x1="-149330.9" y1="16111.5" x2="1064.0" y2="381.3" /><line x1="-144167.1" y1="16095.8" x2="1074.9" y2="381.3" /><line x1="-139003.3" y1="16080.1" x2="1085.7" y2="381.2" /><line x1="-133839.6" y1="16064.4" x2="1096.5" y2="381.1" /><line x1="-128675.8" y1="16048.7" x2="1107.3" y2="381.1" /><line x1="-123512.0" y1="16033.0" x2="1118.1" y2="381.0" /><line x1="-118348.3" y1="16017.3" x2="1128.8" y2="381.0" /><line x1="-113184.5" y1="16001.5" x2="1139.6" y2="380.9" /><line x1="-108020.7" y1="15985.8" x2="1150.3" y2="380.9" /><line x1="-102857.0" y1="15970.1" x2="1161.0" y2="380.8" /><line x1="-97693.2" y1="15954.4" x2="1171.7" y2="380.8" /><line x1="-92529.4" y1="15938.7" x2="1182.4" y2="380.7" /><line x1="-87365.7" y1="15923.0" x2="1193.1" y2="380.7" /><line x1="-82201.9" y1="15907.3" x2="1203.8" y2="380.6" /><line x1="-77038.1" y1="15891.6" x2="1214.4" y2="380.6" /><line x1="-71874.4" y1="15875.9" x2="1225.1" y2="380.5" /><line x1="-66710.6" y1="15860.2" x2="1235.7" y2="380.4" /><line x1="-61546.8" y1="15844.5" x2="1246.3" y2="380.4" /><line x1="-56383.1" y1="15828.8" x2="1256.9" y2="380.3" /><line x1="-51219.3" y1="15813.1" x2="1267.4" y2="380.3" /><line x1="-46055.6" y1="15797.4" x2="1278.0" y2="380.2" /><line x1="-40891.8" y1="15781.7" x2="1288.6" y2="380.2" /><line x1="-30564.3" y1="15750.3" x2="1309.6" y2="380.1" /><line x1="-25400.5" y1="15734.6" x2="1320.1" y2="380.0" /><line x1="-20236.7" y1="15718.9" x2="1330.6" y2="380.0" /><line x1="-15073.0" y1="15703.2" x2="1341.1" y2="379.9" /><line x1="-9909.2" y1="15687.5" x2="1351.5" y2="379.9" /><line x1="-4745.4" y1="15671.8" x2="1362.0" y2="379.8" /><line x1="418.3" y1="15656.1" x2="1372.4" y2="379.8" /><line x1="5582.1" y1="15640.4" x2="1382.8" y2="379.7" /><line x1="10745.9" y1="15624.6" x2="1393.3" y2="379.7" /><line x1="15909.6" y1="15608.9" x2="1403.6" y2="379.6" /><line x1="21073.4" y1="15593.2" x2="1414.0" y2="379.6" /><line x1="26237.2" y1="15577.5" x2="1424.4" y2="379.5" /><line x1="27097.7" y1="13381.6" x2="1434.7" y2="379.4" /><line x1="24867.1" y1="10494.4" x2="1445.1" y2="379.4" /><line x1="23443.1" y1="8651.3" x2="1455.4" y2="379.3" /><line x1="22455.3" y1="7372.7" x2="1465.7" y2="379.3" /><line x1="21729.8" y1="6433.7" x2="1476.0" y2="379.2" /><line x1="21174.4" y1="5714.8" x2="1486.3" y2="379.2" /><line x1="20735.5" y1="5146.8" x2="1496.6" y2="379.1" /><line x1="20380.0" y1="4686.6" x2="1506.8" y2="379.1" /><line x1="20086.2" y1="4306.3" x2="1517.1" y2="379.0" /><line x1="19839.3" y1="3986.7" x2="1527.3" y2="379.0" /><line x1="19628.8" y1="3714.3" x2="1537.5" y2="378.9" /><line x1="19447.4" y1="3479.4" x2="1547.7" y2="378.9" /><line x1="19289.3" y1="3274.8" x2="1557.9" y2="378.8" /><line x1="19150.3" y1="3094.9" x2="1568.1" y2="378.8" /><line x1="19027.2" y1="2935.6" x2="1578.2" y2="378.7" /><line x1="18917.3" y1="2793.4" x2="1588.4" y2="378.7" /><line x1="18818.8" y1="2665.8" x2="1598.5" y2="378.6" /><line x1="18729.8" y1="2550.6" x2="1608.6" y2="378.6" /><line x1="18649.1" y1="2446.2" x2="1618.8" y2="378.5" /><line x1="18575.5" y1="2351.0" x2="1628.8" y2="378.5" /><line x1="18508.2" y1="2263.9" x2="1638.9" y2="378.4" /><line x1="18446.4" y1="2183.9" x2="1649.0" y2="378.4" /><line x1="18389.4" y1="2110.1" x2="1659.1" y2="378.3" /><line x1="18336.8" y1="2042.0" x2="1669.1" y2="378.3" /><line x1="18287.9" y1="1978.7" x2="1679.1" y2="378.2" /><line x1="18242.5" y1="1919.9" x2="1689.1" y2="378.2" /><line x1="18200.1" y1="1865.1" x2="1699.1" y2="378.1" /><line x1="18160.6" y1="1813.9" x2="1709.1" y2="378.1" /><line x1="18123.5" y1="1765.9" x2="1719.1" y2="378.0" /><line x1="18088.7" y1="1720.9" x2="1729.1" y2="378.0" /><line x1="18056.0" y1="1678.6" x2="1739.0" y2="377.9" /><line x1="18025.2" y1="1638.7" x2="1749.0" y2="377.9" /><line x1="17996.1" y1="1601.1" x2="1758.9" y2="377.8" /><line x1="17968.6" y1="1565.5" x2="1768.8" y2="377.8" /><line x1="17942.6" y1="1531.8" x2="1778.7" y2="377.7" /><line x1="17917.9" y1="1499.9" x2="1788.6" y2="377.7" /><line x1="17894.5" y1="1469.5" x2="1798.5" y2="377.6" /><line x1="17872.3" y1="1440.7" x2="1808.3" y2="377.6" /><line x1="17851.1" y1="1413.3" x2="1818.2" y2="377.5" /><line x1="17830.9" y1="1387.1" x2="1828.0" y2="377.5" /><line x1="17811.6" y1="1362.2" x2="1837.8" y2="377.4" /><line x1="17793.2" y1="1338.4" x2="1847.6" y2="377.4" /><line x1="17775.6" y1="1315.6" x2="1857.4" y2="377.3" /><line x1="17758.7" y1="1293.8" x2="1867.2" y2="377.3" /><line x1="17742.6" y1="1272.9" x2="1877.0" y2="377.2" /><line x1="17727.1" y1="1252.9" x2="1886.7" y2="377.2" /><line x1="17712.3" y1="1233.7" x2="1896.5" y2="377.1" /><line x1="17698.0" y1="1215.2" x2="1906.2" y2="377.1" /><line x1="17684.3" y1="1197.5" x2="1915.9" y2="377.0" /><line x1="17671.2" y1="1180.4" x2="1925.7" y2="377.0" /><line x1="17658.5" y1="1164.0" x2="1935.4" y2="376.9" /><line x1="17646.3" y1="1148.2" x2="1945.0" y2="376.9" /><line x1="17634.5" y1="1133.0" x2="1954.7" y2="376.8" /><line x1="17623.1" y1="1118.2" x2="1964.4" y2="376.8" /><line x1="17612.1" y1="1104.0" x2="1974.0" y2="376.7" /><line x1="17601.5" y1="1090.3" x2="1983.6" y2="376.7" /><line x1="17591.3" y1="1077.1" x2="1993.3" y2="376.6" /><line x1="17581.4" y1="1064.3" x2="2002.9" y2="376.6" /><line x1="17571.8" y1="1051.9" x2="2012.5" y2="376.5" /><line x1="17562.6" y1="1039.9" x2="2022.1" y2="376.5" /><line x1="17553.6" y1="1028.2" x2="2031.6" y2="376.5" /><line x1="17544.9" y1="1017.0" x2="2041.2" y2="376.4" /><line x1="17536.4" y1="1006.0" x2="2050.7" y2="376.4" /><line x1="17528.2" y1="995.5" x2="2060.3" y2="376.3" /><line x1="17520.3" y1="985.2" x2="2069.8" y2="376.3" /><line x1="17512.6" y1="975.2" x2="2079.3" y2="376.2" /><line x1="17505.1" y1="965.5" x2="2088.8" y2="376.2" /><line x1="17497.8" y1="956.1" x2="2098.3" y2="376.1" /><line x1="17490.8" y1="946.9" x2="2107.8" y2="376.1" /><line x1="17483.9" y1="938.0" x2="2117.2" y2="376.0" /><line x1="17477.2" y1="929.4" x2="2126.7" y2="376.0" /><line x1="17470.7" y1="921.0" x2="2136.1" y2="375.9" /><line x1="17464.3" y1="912.7" x2="2145.6" y2="375.9" /></g><line x1="-60288.2" y1="2760.1" x2="8095.5" y2="584.4" stroke="#808088" stroke-width="1"/><line x1="-35728.0" y1="15766.0" x2="1299.1" y2="380.1" stroke="#606068" stroke-width="1"/><rect x="951" y="164" width="890" height="215.9" fill="#fefeff"/><path d="M1067,409.8 L1121.5,429.3 L1173.3,447.4 Q1200,455.5 1225.2,462.4 Q1252,468 1277,471.3 Q1296,473.6 1316,474.9 L1354.8,475.4 L1080,478 Z" fill="#f42226"/><path d="M1067,409.8 L1121.5,429.3 L1173.3,447.4 Q1200,455.5 1225.2,462.4 Q1252,468 1277,471.3 Q1296,473.6 1316,474.9 L1354.8,475.4" fill="none" stroke="#70e0c8" stroke-width="0.8"/><polygon points="997.1,478.4 1069.9,478.4 1095.5,606.8 1028.7,607.4" fill="#f42226"/><line x1="997" y1="478.5" x2="1354.8" y2="475.4" stroke="#7a6a40" stroke-width="1.2"/><line x1="1069" y1="478.3" x2="1081" y2="478.1" stroke="#40c040" stroke-width="1.5"/><line x1="1069.6" y1="478" x2="1095.6" y2="605.6" stroke="#6a5a30" stroke-width="1.3"/><line x1="1261.5" y1="477.2" x2="1271.9" y2="603" stroke="#6a5a30" stroke-width="1.3"/><text x="1005" y="487" font-family="Liberation Sans" font-size="12" fill="#5a5ad8">-26.737 tfm</text><text x="1033" y="605" font-family="Liberation Sans" font-size="12" fill="#5a5ad8">-26.737 tfm</text><text x="0" y="0" font-family="Liberation Sans" font-size="12" fill="#5a5ad8" transform="translate(1071,414) rotate(77)">-24.805 tfm</text><g transform="translate(1097.5,610.5)" fill="none" stroke="#30a830" stroke-width="0.9"><rect x="-13" y="-4" width="26" height="8"/><rect x="-9" y="-3" width="18" height="6" transform="rotate(-45)"/></g><g transform="translate(1272,607)" fill="none" stroke="#30a830" stroke-width="0.9"><rect x="-13" y="-4" width="26" height="8"/><rect x="-9" y="-3" width="18" height="6" transform="rotate(-80)"/></g><g transform="translate(1527.6,603.6)" fill="none" stroke="#30a830" stroke-width="0.9"><rect x="-13" y="-4" width="26" height="8"/><rect x="-9" y="-3" width="18" height="6" transform="rotate(-75)"/></g><g transform="translate(1693.6,601)" fill="none" stroke="#30a830" stroke-width="0.9"><rect x="-13" y="-4" width="26" height="8"/><rect x="-9" y="-3" width="18" height="6" transform="rotate(40)"/></g><line x1="1538" y1="473.9" x2="1808.9" y2="471.3" stroke="#7a6a40" stroke-width="1.2"/><path d="M1565,474 C1620,478 1650,477 1665,473 Z" fill="#f0e020"/><line x1="1538" y1="473.9" x2="1580" y2="473.6" stroke="#50d0a0" stroke-width="1.2"/><polygon points="1676.7,472.4 1710.4,467.8 1710.4,472.6" fill="#f42226"/><polygon points="1731,467.8 1780.4,472 1731,472.6" fill="#f42226"/><line x1="1710" y1="472.6" x2="1731" y2="472.4" stroke="#40c040" stroke-width="1.3"/><line x1="1539.3" y1="474.6" x2="1528.9" y2="600.4" stroke="#60c8a0" stroke-width="1.4"/><line x1="1540.3" y1="476" x2="1529.6" y2="598" stroke="#e03020" stroke-width="0.9"/><line x1="1720.8" y1="472.6" x2="1694.8" y2="597.8" stroke="#60c8a0" stroke-width="1.4"/><line x1="1719.8" y1="475" x2="1697" y2="590" stroke="#a05030" stroke-width="0.7"/><text x="956" y="180" font-family="Liberation Sans" font-size="12.4" fill="#ff1010">Kesit Tesirleri (M3) : 1.4G+1.6Q</text></svg>
<div class="a" style="left:2px;top:165px;width:21px;height:570px;border-radius:3px;background:linear-gradient(90deg,#f4f5f8,#dfe3ea);border:1px solid #c6cbd3;border-left-color:#fbfcfd"></div>
<svg style="left:8px;top:169px" width="14" height="3"><g fill="#a4aab4"><rect x="0" y="0" width="2" height="2"/><rect x="4" y="0" width="2" height="2"/><rect x="8" y="0" width="2" height="2"/><rect x="12" y="0" width="2" height="2"/></g></svg>
<div class="a" style="left:2px;top:722px;width:21px;height:13px;border-radius:0 0 4px 4px;background:linear-gradient(#c4c9d1,#aeb4bd)"></div>
<svg style="left:12px;top:724px" width="9" height="9"><path d="M1,1V8" stroke="#fff" stroke-width="1.2"/><path d="M3,1L8,4.5L3,8Z" fill="#fff"/></svg>
<svg style="left:4px;top:177px" width="16" height="16" viewBox="0 0 16 16" shape-rendering="crispEdges"><rect x="1" y="2" width="14" height="12" fill="#fff" stroke="#333" stroke-width="1.1"/><path d="M5,6H13M5,9H13M5,12H13" stroke="#2a4a6a"/><path d="M3,6H4M3,9H4M3,12H4" stroke="#6af"/><circle cx="13" cy="3.5" r="0.9" fill="#e02020"/></svg>
<svg style="left:4px;top:206px" width="16" height="16" viewBox="0 0 16 16" shape-rendering="crispEdges"><rect x="1" y="1" width="7" height="5" fill="#a06070" stroke="#000" stroke-width="0.8"/><rect x="8" y="9" width="7" height="5" fill="#4a5a8a" stroke="#000" stroke-width="0.8"/><path d="M7,4L7,12L9,10L11,13L12,12L10,9L13,9Z" fill="#fff" stroke="#000" stroke-width="0.8"/></svg>
<svg style="left:4px;top:227px" width="16" height="16" viewBox="0 0 16 16" shape-rendering="crispEdges"><rect x="1" y="1" width="7" height="5" fill="#fff" stroke="#999" stroke-width="0.8"/><rect x="8" y="9" width="7" height="5" fill="#fff" stroke="#999" stroke-width="0.8"/><path d="M7,4L7,12L9,10L11,13L12,12L10,9L13,9Z" fill="#fff" stroke="#333" stroke-width="0.8"/></svg>
<svg style="left:4px;top:248px" width="16" height="16" viewBox="0 0 16 16" shape-rendering="crispEdges"><rect x="8" y="1" width="7" height="5" fill="#4a5a8a" stroke="#000" stroke-width="0.8"/><rect x="1" y="9" width="7" height="5" fill="#a06070" stroke="#000" stroke-width="0.8"/><path d="M2,8L8,5" stroke="#000"/><path d="M13,7V15M11,13L13,15L15,13" fill="none" stroke="#000"/></svg>
<svg style="left:4px;top:269px" width="16" height="16" viewBox="0 0 16 16" shape-rendering="crispEdges"><rect x="1" y="1" width="7" height="4" fill="#a06070" stroke="#000" stroke-width="0.8"/><rect x="3" y="6" width="6" height="4" fill="#a06070" stroke="#000" stroke-width="0.8"/><rect x="7" y="11" width="8" height="4" fill="#fff" stroke="#999" stroke-width="0.8"/><path d="M12,2V8M9,5H15" stroke="#000" stroke-dasharray="1,1"/></svg>
<svg style="left:4px;top:290px" width="16" height="16" viewBox="0 0 16 16" shape-rendering="crispEdges"><path d="M1,4H10M1,7H10M1,10H10M1,13H10M3,3V15M6,3V15" stroke="#b06070" stroke-width="0.8"/><rect x="4" y="3" width="6" height="4" fill="#4a5a8a"/><path d="M9,5L9,13L11,11L13,14L14,13L12,10L15,10Z" fill="#fff" stroke="#000" stroke-width="0.8"/></svg>
<svg style="left:4px;top:319px" width="16" height="16" viewBox="0 0 16 16" shape-rendering="crispEdges"><text x="0" y="12" font-size="10" fill="#222">?</text><path d="M7,2Q5,8 7,14" fill="none" stroke="#222" stroke-width="1.2"/><rect x="10" y="1" width="4" height="14" fill="#222"/><rect x="11" y="2" width="2" height="12" fill="#ee0"/></svg>
<svg style="left:4px;top:349px" width="16" height="16" viewBox="0 0 16 16" shape-rendering="crispEdges"><path d="M3,1H11L13,3V15H3Z" fill="#fff" stroke="#000" stroke-width="1.2"/><path d="M5,5H11M5,8H11M5,11H11" stroke="#000"/></svg>
<svg style="left:4px;top:377px" width="16" height="16" viewBox="0 0 16 16" shape-rendering="crispEdges"><path d="M3,2H14L12,5H1Z M3,11H14L12,14H1Z" fill="none" stroke="#a01010" stroke-width="1.2"/><path d="M7,5V11M5,7L7,5L9,7" fill="none" stroke="#2a4a8a" stroke-width="1"/></svg>
<svg style="left:4px;top:398px" width="16" height="16" viewBox="0 0 16 16" shape-rendering="crispEdges"><path d="M1,1H8L10,3V10H1Z" fill="#fff" stroke="#000"/><path d="M5,5H12L14,7V15H5Z" fill="#fff" stroke="#000"/><path d="M7,9H12M7,11H12M7,13H12" stroke="#000"/></svg>
<svg style="left:4px;top:419px" width="16" height="16" viewBox="0 0 16 16" shape-rendering="crispEdges"><rect x="2" y="4" width="12" height="11" fill="#aaa" stroke="#777"/><path d="M5,4V1H11V4" fill="none" stroke="#777"/></svg>
<svg style="left:4px;top:440px" width="16" height="16" viewBox="0 0 16 16" shape-rendering="crispEdges"><rect x="1" y="3" width="8" height="8" fill="#cde" stroke="#345" stroke-width="0.8"/><rect x="8" y="7" width="7" height="8" fill="none" stroke="#345" stroke-dasharray="1,1"/><path d="M9,1Q13,1 13,5" fill="none" stroke="#345"/></svg>
<svg style="left:4px;top:460px" width="16" height="16" viewBox="0 0 16 16" shape-rendering="crispEdges"><rect x="1" y="1" width="8" height="8" fill="#cde" stroke="#345" stroke-width="0.8"/><rect x="5" y="6" width="8" height="9" fill="#cde" stroke="#345" stroke-width="0.8"/></svg>
<svg style="left:4px;top:482px" width="16" height="16" viewBox="0 0 16 16" shape-rendering="crispEdges"><rect x="1" y="1" width="6" height="8" fill="#cde" stroke="#345" stroke-width="0.8"/><rect x="9" y="1" width="6" height="8" fill="#cde" stroke="#345" stroke-width="0.8"/><path d="M1,12Q8,16 15,12" fill="none" stroke="#345"/></svg>
<svg style="left:4px;top:504px" width="16" height="16" viewBox="0 0 16 16" shape-rendering="crispEdges"><g fill="none" stroke="#000" stroke-width="1.3"><circle cx="8" cy="2.5" r="1.5"/><circle cx="3" cy="5.5" r="1.5"/><circle cx="13" cy="5.5" r="1.5"/><circle cx="3" cy="11" r="1.5"/><circle cx="13" cy="11" r="1.5"/><circle cx="8" cy="13.5" r="1.5"/></g></svg>
<svg style="left:4px;top:532px" width="16" height="16" viewBox="0 0 16 16" shape-rendering="crispEdges"><path d="M1,15L15,3" stroke="#000" stroke-width="1.2"/><path d="M3,8L9,3H14L8,8Z" fill="#9ab" stroke="#456" stroke-width="0.6"/><path d="M3,8V12L8,12V8" fill="#cde"/></svg>
<svg style="left:4px;top:554px" width="16" height="16" viewBox="0 0 16 16" shape-rendering="crispEdges"><rect x="1" y="2" width="14" height="12" fill="#fff" stroke="#2a5a74" stroke-width="1.3"/><path d="M4,2V14M12,2V14" stroke="#2a5a74" stroke-width="1.6"/><path d="M11,6L14,9" stroke="#000"/></svg>
<svg style="left:4px;top:575px" width="16" height="16" viewBox="0 0 16 16" shape-rendering="crispEdges"><path d="M1,12L9,6H15L7,12Z" fill="#6a8ab0"/><path d="M4,3V10M7,1V8M10,3V8" stroke="#3a5a7a" stroke-width="1.6"/></svg>
<svg style="left:4px;top:595px" width="16" height="16" viewBox="0 0 16 16" shape-rendering="crispEdges"><path d="M1,15L15,1" stroke="#000" stroke-width="1.2"/><path d="M2,9H14" stroke="#345" stroke-width="1.2"/><path d="M9,9L13,7" stroke="#678"/></svg>
<svg style="left:4px;top:617px" width="16" height="16" viewBox="0 0 16 16" shape-rendering="crispEdges"><path d="M4,15V4H15V8" fill="none" stroke="#000" stroke-width="1.4"/><circle cx="4" cy="3" r="2" fill="none" stroke="#a040a0"/><path d="M6,6V15" stroke="#999" stroke-dasharray="1,1"/></svg>
<svg style="left:4px;top:646px" width="16" height="16" viewBox="0 0 16 16" shape-rendering="crispEdges"><rect x="1" y="2" width="6" height="12" rx="3" fill="#2a4a6a"/><rect x="8" y="1" width="7" height="8" fill="#e8e0a0" stroke="#666" stroke-width="0.6"/><circle cx="10" cy="11" r="3" fill="#e02020"/></svg>
<svg style="left:4px;top:674px" width="16" height="16" viewBox="0 0 16 16" shape-rendering="crispEdges"><text x="1" y="7" font-size="6" font-weight="bold" fill="#2a4a8a">AUTO</text><text x="2" y="13" font-size="6.5" font-weight="bold" fill="#2a4a8a">ABC</text><path d="M2,15H14" stroke="#2a4a8a" stroke-width="1.2"/></svg>
<svg style="left:4px;top:703px" width="16" height="16" viewBox="0 0 16 16" shape-rendering="crispEdges"><path d="M1,14V8L4,2H6V14Z M15,14V8L12,2H10V14Z" fill="#000"/><path d="M6,6H10V10H6Z" fill="#000"/><rect x="2" y="9" width="3" height="4" fill="#fff"/><rect x="11" y="9" width="3" height="4" fill="#fff"/></svg>
<div class="a" style="left:6px;top:200px;width:13px;height:1px;background:#b8bec8"></div>
<div class="a" style="left:6px;top:312px;width:13px;height:1px;background:#b8bec8"></div>
<div class="a" style="left:6px;top:342px;width:13px;height:1px;background:#b8bec8"></div>
<div class="a" style="left:6px;top:371px;width:13px;height:1px;background:#b8bec8"></div>
<div class="a" style="left:6px;top:526px;width:13px;height:1px;background:#b8bec8"></div>
<div class="a" style="left:6px;top:639px;width:13px;height:1px;background:#b8bec8"></div>
<div class="a" style="left:6px;top:668px;width:13px;height:1px;background:#b8bec8"></div>
<div class="a" style="left:6px;top:696px;width:13px;height:1px;background:#b8bec8"></div>
<div class="a" style="left:25px;top:167px;width:21px;height:86px;background:linear-gradient(90deg,#fff6d8,#ffd66e);border:1px solid #e4c060;border-left-color:#f4e4b0"></div>
<div class="t" style="left:28px;top:170px;font-size:12px;color:#707070;writing-mode:vertical-rl;">Yapı Ağacı</div>
<div class="a" style="left:1843px;top:165px;width:24px;height:467px;border-radius:3px;background:linear-gradient(90deg,#f4f5f8,#dfe3ea);border:1px solid #c6cbd3;border-left-color:#fbfcfd"></div>
<svg style="left:1849px;top:169px" width="14" height="3"><g fill="#a4aab4"><rect x="0" y="0" width="2" height="2"/><rect x="4" y="0" width="2" height="2"/><rect x="8" y="0" width="2" height="2"/><rect x="12" y="0" width="2" height="2"/></g></svg>
<div class="a" style="left:1843px;top:619px;width:24px;height:13px;border-radius:0 0 4px 4px;background:linear-gradient(#c4c9d1,#aeb4bd)"></div>
<svg style="left:1856px;top:621px" width="9" height="9"><path d="M1,1V8" stroke="#fff" stroke-width="1.2"/><path d="M3,1L8,4.5L3,8Z" fill="#fff"/></svg>
<div class="a" style="left:1869px;top:163px;width:24px;height:475px;border-radius:3px;background:linear-gradient(90deg,#f4f5f8,#dfe3ea);border:1px solid #c6cbd3;border-left-color:#fbfcfd"></div>
<svg style="left:1875px;top:167px" width="14" height="3"><g fill="#a4aab4"><rect x="0" y="0" width="2" height="2"/><rect x="4" y="0" width="2" height="2"/><rect x="8" y="0" width="2" height="2"/><rect x="12" y="0" width="2" height="2"/></g></svg>
<div class="a" style="left:1869px;top:625px;width:24px;height:13px;border-radius:0 0 4px 4px;background:linear-gradient(#c4c9d1,#aeb4bd)"></div>
<svg style="left:1882px;top:627px" width="9" height="9"><path d="M1,1V8" stroke="#fff" stroke-width="1.2"/><path d="M3,1L8,4.5L3,8Z" fill="#fff"/></svg>
<div class="a" style="left:1869px;top:640px;width:24px;height:314px;border-radius:3px;background:linear-gradient(90deg,#f4f5f8,#dfe3ea);border:1px solid #c6cbd3;border-left-color:#fbfcfd"></div>
<svg style="left:1875px;top:644px" width="14" height="3"><g fill="#a4aab4"><rect x="0" y="0" width="2" height="2"/><rect x="4" y="0" width="2" height="2"/><rect x="8" y="0" width="2" height="2"/><rect x="12" y="0" width="2" height="2"/></g></svg>
<div class="a" style="left:1869px;top:941px;width:24px;height:13px;border-radius:0 0 4px 4px;background:linear-gradient(#c4c9d1,#aeb4bd)"></div>
<svg style="left:1882px;top:943px" width="9" height="9"><path d="M1,1V8" stroke="#fff" stroke-width="1.2"/><path d="M3,1L8,4.5L3,8Z" fill="#fff"/></svg>
<div class="a" style="left:1895px;top:163px;width:25px;height:678px;border-radius:3px;background:linear-gradient(90deg,#f4f5f8,#dfe3ea);border:1px solid #c6cbd3;border-left-color:#fbfcfd"></div>
<svg style="left:1901px;top:167px" width="14" height="3"><g fill="#a4aab4"><rect x="0" y="0" width="2" height="2"/><rect x="4" y="0" width="2" height="2"/><rect x="8" y="0" width="2" height="2"/><rect x="12" y="0" width="2" height="2"/></g></svg>
<div class="a" style="left:1895px;top:828px;width:25px;height:13px;border-radius:0 0 4px 4px;background:linear-gradient(#c4c9d1,#aeb4bd)"></div>
<svg style="left:1909px;top:830px" width="9" height="9"><path d="M1,1V8" stroke="#fff" stroke-width="1.2"/><path d="M3,1L8,4.5L3,8Z" fill="#fff"/></svg>
<div class="a" style="left:1895px;top:843px;width:25px;height:188px;border-radius:3px;background:linear-gradient(90deg,#f4f5f8,#dfe3ea);border:1px solid #c6cbd3;border-left-color:#fbfcfd"></div>
<svg style="left:1901px;top:847px" width="14" height="3"><g fill="#a4aab4"><rect x="0" y="0" width="2" height="2"/><rect x="4" y="0" width="2" height="2"/><rect x="8" y="0" width="2" height="2"/><rect x="12" y="0" width="2" height="2"/></g></svg>
<div class="a" style="left:1895px;top:1018px;width:25px;height:13px;border-radius:0 0 4px 4px;background:linear-gradient(#c4c9d1,#aeb4bd)"></div>
<svg style="left:1909px;top:1020px" width="9" height="9"><path d="M1,1V8" stroke="#fff" stroke-width="1.2"/><path d="M3,1L8,4.5L3,8Z" fill="#fff"/></svg>
<svg style="left:1848px;top:174px" width="16" height="16" viewBox="0 0 16 16" shape-rendering="crispEdges"><rect x="1" y="2" width="14" height="12" fill="#fff" stroke="#999" stroke-width="1"/><path d="M1,8H15M8,2V14" stroke="#999" stroke-width="1"/></svg>
<svg style="left:1848px;top:198px" width="16" height="16" viewBox="0 0 16 16" shape-rendering="crispEdges"><path d="M2,4H13M2,11H13" stroke="#000" stroke-width="2.4"/><path d="M4,4V11M11,4V11" stroke="#e02020" stroke-width="1"/><path d="M4,1V3M11,1V3M4,12V15M11,12V15" stroke="#e02020" stroke-width="1"/><path d="M8,9L14,15L16,13L10,7Z" fill="#1a2a9a" stroke="#000" stroke-width="0.6"/><path d="M8,9L7,6L10,7Z" fill="#f4d8c0" stroke="#000" stroke-width="0.5"/><path d="M14,15L16,13" stroke="#c02020" stroke-width="1.2"/></svg>
<svg style="left:1848px;top:219px" width="16" height="16" viewBox="0 0 16 16" shape-rendering="crispEdges"><rect x="1" y="1" width="12" height="11" fill="#fff" stroke="#000" stroke-width="1"/><path d="M4,2V11M7,2V11M10,2V11" stroke="#777" stroke-width="0.8"/><path d="M8,9L14,15L16,13L10,7Z" fill="#1a2a9a" stroke="#000" stroke-width="0.6"/><path d="M8,9L7,6L10,7Z" fill="#f4d8c0" stroke="#000" stroke-width="0.5"/><path d="M14,15L16,13" stroke="#c02020" stroke-width="1.2"/></svg>
<svg style="left:1848px;top:240px" width="16" height="16" viewBox="0 0 16 16" shape-rendering="crispEdges"><path d="M2,1H6M2,15H6" stroke="#e02020" stroke-width="1"/><rect x="3" y="1" width="3" height="14" fill="#ccc" stroke="#000" stroke-width="0.8"/><path d="M8,9L14,15L16,13L10,7Z" fill="#1a2a9a" stroke="#000" stroke-width="0.6"/><path d="M8,9L7,6L10,7Z" fill="#f4d8c0" stroke="#000" stroke-width="0.5"/><path d="M14,15L16,13" stroke="#c02020" stroke-width="1.2"/></svg>
<svg style="left:1848px;top:261px" width="16" height="16" viewBox="0 0 16 16" shape-rendering="crispEdges"><path d="M1,2H14V10H11Q8,6 5,10H1Z" fill="#fff" stroke="#000" stroke-width="1"/><path d="M8,9L14,15L16,13L10,7Z" fill="#1a2a9a" stroke="#000" stroke-width="0.6"/><path d="M8,9L7,6L10,7Z" fill="#f4d8c0" stroke="#000" stroke-width="0.5"/><path d="M14,15L16,13" stroke="#c02020" stroke-width="1.2"/></svg>
<svg style="left:1848px;top:282px" width="16" height="16" viewBox="0 0 16 16" shape-rendering="crispEdges"><rect x="1" y="1" width="8" height="4" fill="#fff" stroke="#000"/><rect x="1" y="5" width="10" height="4" fill="#fff" stroke="#000"/><rect x="1" y="9" width="6" height="4" fill="#fff" stroke="#000"/><path d="M8,9L14,15L16,13L10,7Z" fill="#1a2a9a" stroke="#000" stroke-width="0.6"/><path d="M8,9L7,6L10,7Z" fill="#f4d8c0" stroke="#000" stroke-width="0.5"/><path d="M14,15L16,13" stroke="#c02020" stroke-width="1.2"/></svg>
<svg style="left:1848px;top:303px" width="16" height="16" viewBox="0 0 16 16" shape-rendering="crispEdges"><rect x="1" y="1" width="8" height="4" fill="#fff" stroke="#000"/><rect x="1" y="5" width="10" height="4" fill="#fff" stroke="#000"/><rect x="1" y="9" width="6" height="4" fill="#fff" stroke="#000"/><path d="M8,9L14,15L16,13L10,7Z" fill="#1a2a9a" stroke="#000" stroke-width="0.6"/><path d="M8,9L7,6L10,7Z" fill="#f4d8c0" stroke="#000" stroke-width="0.5"/><path d="M14,15L16,13" stroke="#c02020" stroke-width="1.2"/></svg>
<svg style="left:1848px;top:324px" width="16" height="16" viewBox="0 0 16 16" shape-rendering="crispEdges"><rect x="3" y="1" width="12" height="12" fill="#fff" stroke="#aaa"/><path d="M3,7H15M9,1V13" stroke="#aaa"/><path d="M4,8L2,13H7Z" fill="#1a2a8a"/></svg>
<svg style="left:1848px;top:344px" width="16" height="16" viewBox="0 0 16 16" shape-rendering="crispEdges"><path d="M6,1H10V7L14,10V13H2V10L6,7Z" fill="#fff" stroke="#000" stroke-width="1"/><path d="M8,9L14,15L16,13L10,7Z" fill="#1a2a9a" stroke="#000" stroke-width="0.6"/><path d="M8,9L7,6L10,7Z" fill="#f4d8c0" stroke="#000" stroke-width="0.5"/><path d="M14,15L16,13" stroke="#c02020" stroke-width="1.2"/></svg>
<svg style="left:1848px;top:365px" width="16" height="16" viewBox="0 0 16 16" shape-rendering="crispEdges"><path d="M1,2H14V9H10L8,12L6,9H1Z" fill="#fff" stroke="#000" stroke-width="1"/><path d="M8,9L14,15L16,13L10,7Z" fill="#1a2a9a" stroke="#000" stroke-width="0.6"/><path d="M8,9L7,6L10,7Z" fill="#f4d8c0" stroke="#000" stroke-width="0.5"/><path d="M14,15L16,13" stroke="#c02020" stroke-width="1.2"/></svg>
<svg style="left:1848px;top:385px" width="16" height="16" viewBox="0 0 16 16" shape-rendering="crispEdges"><path d="M5,1H11V5H15L13,9H3L1,5H5Z" fill="#fff" stroke="#000" stroke-width="1"/><rect x="4" y="4" width="8" height="2" fill="#1a2a9a"/><path d="M8,9L14,15L16,13L10,7Z" fill="#1a2a9a" stroke="#000" stroke-width="0.6"/><path d="M8,9L7,6L10,7Z" fill="#f4d8c0" stroke="#000" stroke-width="0.5"/><path d="M14,15L16,13" stroke="#c02020" stroke-width="1.2"/></svg>
<svg style="left:1848px;top:407px" width="16" height="16" viewBox="0 0 16 16" shape-rendering="crispEdges"><path d="M8,2V14M2,8H14" stroke="#000" stroke-width="1.6"/><circle cx="8" cy="8" r="2.2" fill="#fff" stroke="#000" stroke-width="1"/></svg>
<svg style="left:1848px;top:430px" width="16" height="16" viewBox="0 0 16 16" shape-rendering="crispEdges"><path d="M4,1V10H1V14H13V10H8V4" fill="#fff" stroke="#1a2a9a" stroke-width="1"/><path d="M8,9L14,15L16,13L10,7Z" fill="#1a2a9a" stroke="#000" stroke-width="0.6"/><path d="M8,9L7,6L10,7Z" fill="#f4d8c0" stroke="#000" stroke-width="0.5"/><path d="M14,15L16,13" stroke="#c02020" stroke-width="1.2"/></svg>
<svg style="left:1848px;top:450px" width="16" height="16" viewBox="0 0 16 16" shape-rendering="crispEdges"><path d="M7,1V10H1V14H14V10H10V1Z" fill="#fff" stroke="#1a2a9a" stroke-width="1"/><path d="M8,9L14,15L16,13L10,7Z" fill="#1a2a9a" stroke="#000" stroke-width="0.6"/><path d="M8,9L7,6L10,7Z" fill="#f4d8c0" stroke="#000" stroke-width="0.5"/><path d="M14,15L16,13" stroke="#c02020" stroke-width="1.2"/></svg>
<svg style="left:1848px;top:470px" width="16" height="16" viewBox="0 0 16 16" shape-rendering="crispEdges"><path d="M1,13L14,2M2,10H12" stroke="#000" stroke-width="1"/><path d="M5,6L10,6L12,3" fill="none" stroke="#000"/><path d="M8,9L14,15L16,13L10,7Z" fill="#1a2a9a" stroke="#000" stroke-width="0.6"/><path d="M8,9L7,6L10,7Z" fill="#f4d8c0" stroke="#000" stroke-width="0.5"/><path d="M14,15L16,13" stroke="#c02020" stroke-width="1.2"/></svg>
<svg style="left:1848px;top:491px" width="16" height="16" viewBox="0 0 16 16" shape-rendering="crispEdges"><path d="M1,2H15" stroke="#000" stroke-width="1.8"/><path d="M3,3V14M7,3V14M11,3V14M13,3V14" stroke="#000" stroke-width="1"/><path d="M8,9L14,15L16,13L10,7Z" fill="#1a2a9a" stroke="#000" stroke-width="0.6"/><path d="M8,9L7,6L10,7Z" fill="#f4d8c0" stroke="#000" stroke-width="0.5"/><path d="M14,15L16,13" stroke="#c02020" stroke-width="1.2"/></svg>
<svg style="left:1848px;top:513px" width="16" height="16" viewBox="0 0 16 16" shape-rendering="crispEdges"><path d="M1,11A7,6 0 0 1 15,11Z" fill="#fff" stroke="#000" stroke-width="1"/><path d="M4,11L5,7M8,11V5M12,11L11,7" stroke="#000"/><path d="M8,9L14,15L16,13L10,7Z" fill="#1a2a9a" stroke="#000" stroke-width="0.6"/><path d="M8,9L7,6L10,7Z" fill="#f4d8c0" stroke="#000" stroke-width="0.5"/><path d="M14,15L16,13" stroke="#c02020" stroke-width="1.2"/></svg>
<svg style="left:1848px;top:534px" width="16" height="16" viewBox="0 0 16 16" shape-rendering="crispEdges"><path d="M3,1V15M13,1V15M3,4Q8,10 13,4" fill="none" stroke="#888" stroke-width="1"/><path d="M8,9L14,15L16,13L10,7Z" fill="#e09020" stroke="#000" stroke-width="0.6"/><path d="M8,9L7,6L10,7Z" fill="#f4d8c0" stroke="#000" stroke-width="0.5"/><path d="M14,15L16,13" stroke="#c02020" stroke-width="1.2"/></svg>
<svg style="left:1848px;top:556px" width="16" height="16" viewBox="0 0 16 16" shape-rendering="crispEdges"><path d="M2,1V15M5,1V15" stroke="#3a9a50" stroke-width="1.6"/><path d="M8,6H13L15,8V15H8Z" fill="#9cd0f0" stroke="#000"/></svg>
<svg style="left:1848px;top:575px" width="16" height="16" viewBox="0 0 16 16" shape-rendering="crispEdges"><path d="M1,8H6M9,12H15" stroke="#bbb" stroke-width="1"/><path d="M3,8L5,5L7,8Z M11,12L13,9L15,12Z" fill="#bbb"/></svg>
<svg style="left:1848px;top:595px" width="16" height="16" viewBox="0 0 16 16" shape-rendering="crispEdges"><path d="M4,2H15L12,14H1Z" fill="#fff" stroke="#000" stroke-width="1"/><text x="2" y="13" font-size="6.5" fill="#1a2a9a" font-weight="bold">123</text></svg>
<div class="a" style="left:1847px;top:573px;width:16px;height:1px;background:#b8bec8"></div>
<svg style="left:1873px;top:174px" width="16" height="16" viewBox="0 0 16 16" shape-rendering="crispEdges"><rect x="1" y="4" width="9" height="10" fill="#000"/><rect x="5" y="8" width="10" height="6" fill="#000"/><g fill="#fff"><rect x="2" y="5" width="2" height="2"/><rect x="6" y="5" width="2" height="2"/><rect x="4" y="7" width="2" height="2"/><rect x="2" y="9" width="2" height="2"/><rect x="6" y="9" width="2" height="2"/><rect x="10" y="9" width="2" height="2"/><rect x="4" y="11" width="2" height="2"/><rect x="8" y="11" width="2" height="2"/><rect x="12" y="11" width="2" height="2"/></g><path d="M12,0.5H15.5V4M0.5,12V15.5H4" fill="none" stroke="#20d8e8" stroke-width="1.1"/></svg>
<svg style="left:1873px;top:195px" width="16" height="16" viewBox="0 0 16 16" shape-rendering="crispEdges"><path d="M1,4H15M1,8H15M1,12H15M4,1V15M8,1V15M12,1V15" stroke="#2a5a74" stroke-width="1"/><rect x="6" y="6" width="7" height="8" fill="#2a5a74"/><path d="M7,8H12M7,10H12M7,12H12" stroke="#fff" stroke-width="0.7"/><path d="M12,0.5H15.5V4M0.5,12V15.5H4" fill="none" stroke="#20d8e8" stroke-width="1.1"/></svg>
<svg style="left:1873px;top:216px" width="16" height="16" viewBox="0 0 16 16" shape-rendering="crispEdges"><rect x="1" y="2" width="6" height="2.5" fill="#fff" stroke="#000"/><rect x="1" y="6" width="13" height="2.5" fill="#fff" stroke="#000"/><rect x="1" y="10" width="13" height="2.5" fill="#fff" stroke="#000"/><path d="M12,0.5H15.5V4M0.5,12V15.5H4" fill="none" stroke="#20d8e8" stroke-width="1.1"/></svg>
<svg style="left:1873px;top:238px" width="16" height="16" viewBox="0 0 16 16" shape-rendering="crispEdges"><rect x="1" y="2" width="7" height="12" fill="#000"/><rect x="7" y="7" width="8" height="7" fill="#000"/><g fill="#fff"><rect x="2" y="4" width="2" height="2"/><rect x="5" y="4" width="2" height="2"/><rect x="2" y="8" width="2" height="2"/><rect x="5" y="8" width="2" height="2"/><rect x="9" y="9" width="2" height="2"/><rect x="12" y="9" width="2" height="2"/></g><path d="M12,0.5H15.5V4M0.5,12V15.5H4" fill="none" stroke="#20d8e8" stroke-width="1.1"/></svg>
<svg style="left:1873px;top:268px" width="16" height="16" viewBox="0 0 16 16" shape-rendering="crispEdges"><path d="M7,1V7M5,5L7,8L9,5" fill="none" stroke="#000"/><text x="9" y="6" font-size="6" fill="#000">F</text><rect x="1" y="8" width="14" height="3" fill="#fff" stroke="#000" stroke-width="1"/><path d="M3,11L1,14H5ZM13,11L11,14H15Z" fill="#888"/><path d="M12,0.5H15.5V4M0.5,12V15.5H4" fill="none" stroke="#20d8e8" stroke-width="1.1"/></svg>
<svg style="left:1873px;top:289px" width="16" height="16" viewBox="0 0 16 16" shape-rendering="crispEdges"><path d="M3,2H13L11,4V12L13,14H3L5,12V4Z" fill="#fff" stroke="#000" stroke-width="1"/><path d="M7,4V12M9,4V12" stroke="#000" stroke-width="0.6"/><path d="M12,0.5H15.5V4M0.5,12V15.5H4" fill="none" stroke="#20d8e8" stroke-width="1.1"/></svg>
<svg style="left:1873px;top:310px" width="16" height="16" viewBox="0 0 16 16" shape-rendering="crispEdges"><rect x="1" y="1" width="14" height="14" fill="#e8e8e8"/><path d="M2,6H14L11,10H5Z" fill="#3a6a90"/><rect x="5" y="10" width="6" height="3" fill="#3a6a90"/><path d="M12,0.5H15.5V4M0.5,12V15.5H4" fill="none" stroke="#20d8e8" stroke-width="1.1"/></svg>
<svg style="left:1873px;top:330px" width="16" height="16" viewBox="0 0 16 16" shape-rendering="crispEdges"><path d="M1,11L12,3L15,5L4,13Z" fill="#fff" stroke="#000" stroke-width="1"/><path d="M12,0.5H15.5V4M0.5,12V15.5H4" fill="none" stroke="#20d8e8" stroke-width="1.1"/></svg>
<svg style="left:1873px;top:351px" width="16" height="16" viewBox="0 0 16 16" shape-rendering="crispEdges"><path d="M2,15V2H14V15H10V6H6V15Z" fill="#b0c8e0" stroke="#000" stroke-width="1"/><path d="M12,0.5H15.5V4M0.5,12V15.5H4" fill="none" stroke="#20d8e8" stroke-width="1.1"/></svg>
<svg style="left:1873px;top:381px" width="16" height="16" viewBox="0 0 16 16" shape-rendering="crispEdges"><path d="M5,2H11L13,13H3Z" fill="#fff" stroke="#000" stroke-width="1"/><path d="M12,0.5H15.5V4M0.5,12V15.5H4" fill="none" stroke="#20d8e8" stroke-width="1.1"/></svg>
<svg style="left:1873px;top:401px" width="16" height="16" viewBox="0 0 16 16" shape-rendering="crispEdges"><rect x="1" y="2" width="14" height="11" fill="#fff" stroke="#000" stroke-width="1"/><rect x="4" y="5" width="8" height="5" fill="#fff" stroke="#000"/><path d="M12,0.5H15.5V4M0.5,12V15.5H4" fill="none" stroke="#20d8e8" stroke-width="1.1"/></svg>
<svg style="left:1873px;top:422px" width="16" height="16" viewBox="0 0 16 16" shape-rendering="crispEdges"><path d="M2,5H14V7H2Z" fill="#000"/><path d="M3,7L1,11H6ZM12,7L10,11H15Z" fill="#fff" stroke="#000"/><path d="M12,0.5H15.5V4M0.5,12V15.5H4" fill="none" stroke="#20d8e8" stroke-width="1.1"/></svg>
<svg style="left:1873px;top:442px" width="16" height="16" viewBox="0 0 16 16" shape-rendering="crispEdges"><path d="M6,2H14V9H9V14H6Z" fill="#fff" stroke="#000" stroke-width="1"/><path d="M2,9H6V14H1Z" fill="#ccc"/><path d="M12,0.5H15.5V4M0.5,12V15.5H4" fill="none" stroke="#20d8e8" stroke-width="1.1"/></svg>
<svg style="left:1873px;top:471px" width="16" height="16" viewBox="0 0 16 16" shape-rendering="crispEdges"><path d="M6,1H10V9L13,12V14H3V12L6,9Z" fill="#fff" stroke="#000" stroke-width="1"/><path d="M12,0.5H15.5V4M0.5,12V15.5H4" fill="none" stroke="#20d8e8" stroke-width="1.1"/></svg>
<svg style="left:1873px;top:493px" width="16" height="16" viewBox="0 0 16 16" shape-rendering="crispEdges"><path d="M8,1H13V14H2V9H8Z" fill="#fff" stroke="#000" stroke-width="1"/><path d="M12,0.5H15.5V4M0.5,12V15.5H4" fill="none" stroke="#20d8e8" stroke-width="1.1"/></svg>
<svg style="left:1873px;top:513px" width="16" height="16" viewBox="0 0 16 16" shape-rendering="crispEdges"><path d="M1,12L11,2L15,6L5,15Z" fill="#fff" stroke="#000" stroke-width="1"/><g fill="#000"><rect x="4" y="10" width="2" height="2"/><rect x="7" y="7" width="2" height="2"/><rect x="10" y="4" width="2" height="2"/></g><path d="M12,0.5H15.5V4M0.5,12V15.5H4" fill="none" stroke="#20d8e8" stroke-width="1.1"/></svg>
<svg style="left:1873px;top:534px" width="16" height="16" viewBox="0 0 16 16" shape-rendering="crispEdges"><path d="M1,3H15" stroke="#000" stroke-width="2"/><path d="M3,4V14M6,4V14M9,4V14M12,4V14" stroke="#000" stroke-width="1"/><path d="M12,0.5H15.5V4M0.5,12V15.5H4" fill="none" stroke="#20d8e8" stroke-width="1.1"/></svg>
<svg style="left:1873px;top:555px" width="16" height="16" viewBox="0 0 16 16" shape-rendering="crispEdges"><path d="M1,11A7,6 0 0 1 15,11Z" fill="#fff" stroke="#000" stroke-width="1"/><path d="M4,11L5,7M8,11V5M12,11L11,7" stroke="#000"/><path d="M12,0.5H15.5V4M0.5,12V15.5H4" fill="none" stroke="#20d8e8" stroke-width="1.1"/></svg>
<svg style="left:1873px;top:584px" width="16" height="16" viewBox="0 0 16 16" shape-rendering="crispEdges"><path d="M2,1V7H5Q8,10 11,7H14V1" fill="none" stroke="#2a4ac0" stroke-width="1"/><path d="M2,7V12H5M14,1H11" fill="none" stroke="#e02020" stroke-width="1"/><path d="M12,0.5H15.5V4M0.5,12V15.5H4" fill="none" stroke="#20d8e8" stroke-width="1.1"/></svg>
<svg style="left:1873px;top:605px" width="16" height="16" viewBox="0 0 16 16" shape-rendering="crispEdges"><rect x="1" y="1" width="14" height="14" fill="#2a5a74"/><g fill="#fff"><rect x="2" y="2" width="3" height="3"/><rect x="8" y="2" width="3" height="3"/><rect x="5" y="5" width="3" height="3"/><rect x="2" y="8" width="3" height="3"/></g><circle cx="11" cy="11" r="3" fill="none" stroke="#fff" stroke-width="1"/><path d="M12,0.5H15.5V4M0.5,12V15.5H4" fill="none" stroke="#20d8e8" stroke-width="1.1"/></svg>
<div class="a" style="left:1873px;top:261px;width:16px;height:1px;background:#b8bec8"></div>
<div class="a" style="left:1873px;top:374px;width:16px;height:1px;background:#b8bec8"></div>
<div class="a" style="left:1873px;top:466px;width:16px;height:1px;background:#b8bec8"></div>
<div class="a" style="left:1873px;top:578px;width:16px;height:1px;background:#b8bec8"></div>
<svg style="left:1873px;top:650px" width="16" height="16" viewBox="0 0 16 16" shape-rendering="crispEdges"><path d="M3,14V5L8,1V14M8,14V6L12,3V14" fill="#fff" stroke="#000" stroke-width="1"/><path d="M12,0.5H15.5V4M0.5,12V15.5H4" fill="none" stroke="#e8d020" stroke-width="1.1"/></svg>
<svg style="left:1873px;top:671px" width="16" height="16" viewBox="0 0 16 16" shape-rendering="crispEdges"><path d="M1,5H13L15,3M1,8H13L15,6M1,11H13L15,9" fill="none" stroke="#000" stroke-width="1"/><path d="M12,0.5H15.5V4M0.5,12V15.5H4" fill="none" stroke="#e8d020" stroke-width="1.1"/></svg>
<svg style="left:1873px;top:691px" width="16" height="16" viewBox="0 0 16 16" shape-rendering="crispEdges"><rect x="1" y="1" width="14" height="14" fill="#fff" stroke="#888"/><rect x="3" y="3" width="10" height="10" fill="#000"/><path d="M3,6H13M3,9H13M6,3V13M9,3V13" stroke="#fff" stroke-width="0.8"/><path d="M12,0.5H15.5V4M0.5,12V15.5H4" fill="none" stroke="#e8d020" stroke-width="1.1"/></svg>
<svg style="left:1873px;top:713px" width="16" height="16" viewBox="0 0 16 16" shape-rendering="crispEdges"><rect x="1" y="2" width="14" height="11" fill="#fff" stroke="#000" stroke-width="1"/><path d="M8,5L11,7.5L8,10L5,7.5Z" fill="none" stroke="#000"/><path d="M12,0.5H15.5V4M0.5,12V15.5H4" fill="none" stroke="#e8d020" stroke-width="1.1"/></svg>
<svg style="left:1873px;top:733px" width="16" height="16" viewBox="0 0 16 16" shape-rendering="crispEdges"><rect x="1" y="5" width="14" height="9" fill="#fff" stroke="#000" stroke-width="1"/><circle cx="8" cy="10" r="2" fill="none" stroke="#000"/><path d="M5,2H11M8,2V5" stroke="#000" stroke-width="1"/><path d="M12,0.5H15.5V4M0.5,12V15.5H4" fill="none" stroke="#e8d020" stroke-width="1.1"/></svg>
<svg style="left:1873px;top:754px" width="16" height="16" viewBox="0 0 16 16" shape-rendering="crispEdges"><path d="M1,4H8M3,2V6M6,2V6M1,14L14,8V5H3" fill="none" stroke="#000" stroke-width="1"/><path d="M12,0.5H15.5V4M0.5,12V15.5H4" fill="none" stroke="#e8d020" stroke-width="1.1"/></svg>
<svg style="left:1873px;top:775px" width="16" height="16" viewBox="0 0 16 16" shape-rendering="crispEdges"><path d="M2,1V15" stroke="#000" stroke-width="1"/><path d="M5,4H14V7H12V11H7V7H5Z" fill="#fff" stroke="#000"/><path d="M4,14L14,10" stroke="#000"/><path d="M12,0.5H15.5V4M0.5,12V15.5H4" fill="none" stroke="#e8d020" stroke-width="1.1"/></svg>
<svg style="left:1873px;top:796px" width="16" height="16" viewBox="0 0 16 16" shape-rendering="crispEdges"><path d="M2,1V15M6,1V15M10,1V15M14,1V15" stroke="#000" stroke-width="1.6"/><path d="M1,4H15M1,8H15M1,12H15" stroke="#000" stroke-width="0.8"/><path d="M12,0.5H15.5V4M0.5,12V15.5H4" fill="none" stroke="#e8d020" stroke-width="1.1"/></svg>
<svg style="left:1873px;top:818px" width="16" height="16" viewBox="0 0 16 16" shape-rendering="crispEdges"><rect x="1" y="1" width="14" height="14" fill="#fff" stroke="#000" stroke-width="1"/><path d="M1,1L15,15M15,1L1,15" stroke="#000"/><rect x="5" y="5" width="6" height="6" fill="#000"/><path d="M12,0.5H15.5V4M0.5,12V15.5H4" fill="none" stroke="#e8d020" stroke-width="1.1"/></svg>
<svg style="left:1873px;top:839px" width="16" height="16" viewBox="0 0 16 16" shape-rendering="crispEdges"><path d="M1,12L4,4L8,12L12,4L15,12" fill="none" stroke="#000" stroke-width="1"/><path d="M1,13H15" stroke="#000"/><path d="M12,0.5H15.5V4M0.5,12V15.5H4" fill="none" stroke="#e8d020" stroke-width="1.1"/></svg>
<svg style="left:1873px;top:859px" width="16" height="16" viewBox="0 0 16 16" shape-rendering="crispEdges"><circle cx="8" cy="8" r="6.5" fill="#fff" stroke="#000"/><path d="M1,8H15M8,1V15M3,3L13,13M13,3L3,13" stroke="#000"/><circle cx="8" cy="8" r="2" fill="#000"/><path d="M12,0.5H15.5V4M0.5,12V15.5H4" fill="none" stroke="#e8d020" stroke-width="1.1"/></svg>
<svg style="left:1873px;top:881px" width="16" height="16" viewBox="0 0 16 16" shape-rendering="crispEdges"><path d="M3,1V15" stroke="#000"/><rect x="7" y="3" width="7" height="9" fill="#fff" stroke="#000"/><path d="M9,6V7M9,9V10" stroke="#000"/><path d="M12,0.5H15.5V4M0.5,12V15.5H4" fill="none" stroke="#e8d020" stroke-width="1.1"/></svg>
<svg style="left:1873px;top:902px" width="16" height="16" viewBox="0 0 16 16" shape-rendering="crispEdges"><rect x="1" y="1" width="8" height="8" fill="#ccc" stroke="#000"/><rect x="6" y="6" width="9" height="9" fill="#ccc" stroke="#000"/><path d="M2,7L7,2M8,14L14,8" stroke="#000"/><path d="M12,0.5H15.5V4M0.5,12V15.5H4" fill="none" stroke="#e8d020" stroke-width="1.1"/></svg>
<svg style="left:1873px;top:924px" width="16" height="16" viewBox="0 0 16 16" shape-rendering="crispEdges"><rect x="1" y="3" width="6" height="8" fill="#fff" stroke="#000"/><path d="M7,7H12" stroke="#000"/><rect x="11" y="6" width="4" height="9" fill="#000"/><path d="M10,1H14" stroke="#e8d020"/><path d="M12,0.5H15.5V4M0.5,12V15.5H4" fill="none" stroke="#e8d020" stroke-width="1.1"/></svg>
<svg style="left:1899px;top:175px" width="16" height="16" viewBox="0 0 16 16" shape-rendering="crispEdges"><path d="M1,1H7L9,3V8H1Z" fill="#fff" stroke="#000"/><path d="M4,4H10L12,6V11H4Z" fill="#fff" stroke="#e02020" stroke-width="1"/></svg>
<svg style="left:1899px;top:204px" width="16" height="16" viewBox="0 0 16 16" shape-rendering="crispEdges"><rect x="1" y="1" width="10" height="12" fill="#fff" stroke="#000" stroke-width="1"/><path d="M2,4L3,5L5,2M6,4H10M2,7H10M2,9H10M2,11H10" stroke="#1a2a9a" stroke-width="0.9" fill="none"/><path d="M7,7H13L15.5,9.5V15.5H7Z" fill="#fff" stroke="#000" stroke-width="1"/><path d="M9,10.5H12M9,13H14" stroke="#000" stroke-width="1"/></svg>
<svg style="left:1899px;top:225px" width="16" height="16" viewBox="0 0 16 16" shape-rendering="crispEdges"><rect x="1" y="1" width="10" height="12" fill="#fff" stroke="#000" stroke-width="1"/><path d="M2,4L3,5L5,2M6,4H10M2,7H10M2,9H10M2,11H10" stroke="#1a2a9a" stroke-width="0.9" fill="none"/><path d="M7,7H13L15.5,9.5V15.5H7Z" fill="#fff" stroke="#000" stroke-width="1"/><path d="M9,10.5H12M9,13H14" stroke="#000" stroke-width="1"/></svg>
<svg style="left:1899px;top:246px" width="16" height="16" viewBox="0 0 16 16" shape-rendering="crispEdges"><rect x="1" y="1" width="10" height="12" fill="#fff" stroke="#000" stroke-width="1"/><path d="M2,4L3,5L5,2M6,4H10M2,7H10M2,9H10M2,11H10" stroke="#1a2a9a" stroke-width="0.9" fill="none"/><path d="M7,7H13L15.5,9.5V15.5H7Z" fill="#fff" stroke="#000" stroke-width="1"/><path d="M9,10.5H12M9,13H14" stroke="#000" stroke-width="1"/></svg>
<svg style="left:1899px;top:268px" width="16" height="16" viewBox="0 0 16 16" shape-rendering="crispEdges"><path d="M1,1H8V6H13V13H1Z" fill="#fff" stroke="#1a2a9a" stroke-width="1"/><path d="M6,11V14L4,13" stroke="#000" fill="none"/><path d="M7,7H13L15.5,9.5V15.5H7Z" fill="#fff" stroke="#000" stroke-width="1"/><path d="M9,10.5H12M9,13H14" stroke="#000" stroke-width="1"/></svg>
<svg style="left:1899px;top:289px" width="16" height="16" viewBox="0 0 16 16" shape-rendering="crispEdges"><path d="M5,1H11V3H14V6H2V3H5Z" fill="#fff" stroke="#000" stroke-width="1"/><defs><linearGradient id="rb"><stop offset="0" stop-color="#e02020"/><stop offset=".33" stop-color="#e0e020"/><stop offset=".66" stop-color="#20c040"/><stop offset="1" stop-color="#2040e0"/></linearGradient></defs><rect x="1" y="9" width="14" height="5" fill="url(#rb)"/></svg>
<svg style="left:1899px;top:318px" width="16" height="16" viewBox="0 0 16 16" shape-rendering="crispEdges"><path d="M7,1V6M5,4L7,7L9,4" fill="none" stroke="#000"/><text x="9" y="6" font-size="6" fill="#000">F</text><rect x="1" y="7" width="10" height="3" fill="#fff" stroke="#000"/><path d="M7,7H13L15.5,9.5V15.5H7Z" fill="#fff" stroke="#000" stroke-width="1"/><path d="M9,10.5H12M9,13H14" stroke="#000" stroke-width="1"/></svg>
<svg style="left:1899px;top:339px" width="16" height="16" viewBox="0 0 16 16" shape-rendering="crispEdges"><rect x="1" y="1" width="8" height="2.5" fill="#fff" stroke="#000"/><rect x="1" y="4.5" width="11" height="2.5" fill="#fff" stroke="#000"/><rect x="1" y="8" width="7" height="2.5" fill="#fff" stroke="#000"/><path d="M5,12V14L3,13" fill="none" stroke="#000"/><path d="M7,7H13L15.5,9.5V15.5H7Z" fill="#fff" stroke="#000" stroke-width="1"/><path d="M9,10.5H12M9,13H14" stroke="#000" stroke-width="1"/></svg>
<svg style="left:1899px;top:360px" width="16" height="16" viewBox="0 0 16 16" shape-rendering="crispEdges"><g fill="#fff" stroke="#000"><rect x="1" y="1" width="3" height="3"/><rect x="4" y="1" width="3" height="3"/><rect x="1" y="4" width="3" height="3"/><rect x="4" y="4" width="3" height="3"/><rect x="7" y="4" width="3" height="3"/><rect x="1" y="7" width="3" height="3"/><rect x="4" y="7" width="3" height="3"/></g><path d="M7,7H13L15.5,9.5V15.5H7Z" fill="#fff" stroke="#000" stroke-width="1"/><path d="M9,10.5H12M9,13H14" stroke="#000" stroke-width="1"/></svg>
<svg style="left:1899px;top:380px" width="16" height="16" viewBox="0 0 16 16" shape-rendering="crispEdges"><path d="M2,1H12L10,3V13L12,15H2L4,13V3Z" fill="#ddd" stroke="#000" stroke-width="1"/><path d="M7,7H13L15.5,9.5V15.5H7Z" fill="#fff" stroke="#000" stroke-width="1"/><path d="M9,10.5H12M9,13H14" stroke="#000" stroke-width="1"/></svg>
<svg style="left:1899px;top:401px" width="16" height="16" viewBox="0 0 16 16" shape-rendering="crispEdges"><path d="M1,14V5L7,1V14Z" fill="#8a9aaa" stroke="#000" stroke-width="0.6"/><path d="M7,14V6L11,3V14Z" fill="#bbc" stroke="#000" stroke-width="0.6"/><path d="M7,7H13L15.5,9.5V15.5H7Z" fill="#fff" stroke="#000" stroke-width="1"/><path d="M9,10.5H12M9,13H14" stroke="#000" stroke-width="1"/></svg>
<svg style="left:1899px;top:422px" width="16" height="16" viewBox="0 0 16 16" shape-rendering="crispEdges"><path d="M1,5L8,2L15,5V11L8,14L1,11Z" fill="#999" stroke="#000" stroke-width="0.8"/><path d="M1,7L8,10L15,7M1,9L8,12L15,9" stroke="#ddd" fill="none"/><path d="M7,7H13L15.5,9.5V15.5H7Z" fill="#fff" stroke="#000" stroke-width="1"/><path d="M9,10.5H12M9,13H14" stroke="#000" stroke-width="1"/></svg>
<svg style="left:1899px;top:443px" width="16" height="16" viewBox="0 0 16 16" shape-rendering="crispEdges"><path d="M4,1H8V7L12,9V13H1V9L4,7Z" fill="#fff" stroke="#777"/><path d="M10,1V6M9,4H12" stroke="#777"/><path d="M7,7H13L15.5,9.5V15.5H7Z" fill="#fff" stroke="#000" stroke-width="1"/><path d="M9,10.5H12M9,13H14" stroke="#000" stroke-width="1"/></svg>
<svg style="left:1899px;top:464px" width="16" height="16" viewBox="0 0 16 16" shape-rendering="crispEdges"><path d="M5,2H9V8L12,11V14H2V11L5,8Z" fill="#fff" stroke="#999"/><path d="M7,7H13L15.5,9.5V15.5H7Z" fill="#fff" stroke="#000" stroke-width="1"/><path d="M9,10.5H12M9,13H14" stroke="#000" stroke-width="1"/></svg>
<svg style="left:1899px;top:485px" width="16" height="16" viewBox="0 0 16 16" shape-rendering="crispEdges"><path d="M3,2H13V5H11L13,9H3L5,5H3Z" fill="#fff" stroke="#000"/><rect x="3" y="2" width="10" height="2" fill="#1a2a9a"/><path d="M7,7H13L15.5,9.5V15.5H7Z" fill="#fff" stroke="#000" stroke-width="1"/><path d="M9,10.5H12M9,13H14" stroke="#000" stroke-width="1"/></svg>
<svg style="left:1899px;top:506px" width="16" height="16" viewBox="0 0 16 16" shape-rendering="crispEdges"><rect x="1" y="1" width="12" height="9" fill="#fff" stroke="#1a2a9a" stroke-width="1"/><path d="M6,11V14L4,13" fill="none" stroke="#000"/><path d="M7,7H13L15.5,9.5V15.5H7Z" fill="#fff" stroke="#000" stroke-width="1"/><path d="M9,10.5H12M9,13H14" stroke="#000" stroke-width="1"/></svg>
<svg style="left:1899px;top:528px" width="16" height="16" viewBox="0 0 16 16" shape-rendering="crispEdges"><rect x="1" y="1" width="12" height="9" fill="#fff" stroke="#1a2a9a" stroke-width="1"/><path d="M6,11V14L4,13" fill="none" stroke="#000"/><path d="M7,7H13L15.5,9.5V15.5H7Z" fill="#fff" stroke="#000" stroke-width="1"/><path d="M9,10.5H12M9,13H14" stroke="#000" stroke-width="1"/></svg>
<svg style="left:1899px;top:548px" width="16" height="16" viewBox="0 0 16 16" shape-rendering="crispEdges"><path d="M1,2H13V5H1Z" fill="#1a3a5a"/><path d="M3,5V14M10,5V14" stroke="#1a3a5a" stroke-width="2.2"/><path d="M7,7H13L15.5,9.5V15.5H7Z" fill="#fff" stroke="#000" stroke-width="1"/><path d="M9,10.5H12M9,13H14" stroke="#000" stroke-width="1"/></svg>
<svg style="left:1899px;top:576px" width="16" height="16" viewBox="0 0 16 16" shape-rendering="crispEdges"><path d="M1,14V11H4V8H7V5H10V2" fill="none" stroke="#000" stroke-width="1"/><path d="M2,15L12,4" stroke="#e8e020" stroke-width="2"/><path d="M7,7H13L15.5,9.5V15.5H7Z" fill="#fff" stroke="#e02020" stroke-width="1"/><path d="M9,10.5H12M9,13H14" stroke="#e02020" stroke-width="1"/></svg>
<svg style="left:1899px;top:598px" width="16" height="16" viewBox="0 0 16 16" shape-rendering="crispEdges"><path d="M1,9A7,7 0 0 1 15,9Z" fill="#a8a030" stroke="#000"/><path d="M1,9H15" stroke="#e8e020" stroke-width="2"/><path d="M7,7H13L15.5,9.5V15.5H7Z" fill="#fff" stroke="#e02020" stroke-width="1"/><path d="M9,10.5H12M9,13H14" stroke="#e02020" stroke-width="1"/></svg>
<svg style="left:1899px;top:620px" width="16" height="16" viewBox="0 0 16 16" shape-rendering="crispEdges"><path d="M3,1V12H1V15H10V12H7V5" fill="#fff" stroke="#1a2a4a" stroke-width="1"/><path d="M7,7H13L15.5,9.5V15.5H7Z" fill="#fff" stroke="#000" stroke-width="1"/><path d="M9,10.5H12M9,13H14" stroke="#000" stroke-width="1"/></svg>
<svg style="left:1899px;top:641px" width="16" height="16" viewBox="0 0 16 16" shape-rendering="crispEdges"><rect x="7" y="1" width="5" height="8" fill="#2a5a88"/><rect x="1" y="6" width="6" height="6" fill="#fff" stroke="#2a5a88" stroke-width="1"/><path d="M7,7H13L15.5,9.5V15.5H7Z" fill="#fff" stroke="#000" stroke-width="1"/><path d="M9,10.5H12M9,13H14" stroke="#000" stroke-width="1"/></svg>
<svg style="left:1899px;top:669px" width="16" height="16" viewBox="0 0 16 16" shape-rendering="crispEdges"><path d="M1,3H8M1,7H8M1,11H8" stroke="#e02020" stroke-width="1"/><path d="M6,1L9,3L6,5M6,5L9,7L6,9M6,9L9,11L6,13" fill="#e02020"/><path d="M9,1H13V6" fill="none" stroke="#999"/><path d="M7,7H13L15.5,9.5V15.5H7Z" fill="#fff" stroke="#000" stroke-width="1"/><path d="M9,10.5H12M9,13H14" stroke="#000" stroke-width="1"/></svg>
<svg style="left:1899px;top:690px" width="16" height="16" viewBox="0 0 16 16" shape-rendering="crispEdges"><path d="M1,6H8" stroke="#e02020" stroke-width="1"/><path d="M6,4L9,6L6,8Z" fill="#e02020"/><path d="M9,1H13V6M9,9V12" fill="none" stroke="#999"/><path d="M7,7H13L15.5,9.5V15.5H7Z" fill="#fff" stroke="#000" stroke-width="1"/><path d="M9,10.5H12M9,13H14" stroke="#000" stroke-width="1"/></svg>
<svg style="left:1899px;top:710px" width="16" height="16" viewBox="0 0 16 16" shape-rendering="crispEdges"><path d="M1,3Q6,0 11,3V12H1Z" fill="#fff" stroke="#000" stroke-width="1"/><path d="M4,3V12M7,2V12" stroke="#000"/><path d="M7,7H13L15.5,9.5V15.5H7Z" fill="#fff" stroke="#000" stroke-width="1"/><path d="M9,10.5H12M9,13H14" stroke="#000" stroke-width="1"/></svg>
<svg style="left:1899px;top:741px" width="16" height="16" viewBox="0 0 16 16" shape-rendering="crispEdges"><path d="M2,1V13H9" fill="none" stroke="#000" stroke-width="1"/><path d="M3,12L8,6" stroke="#000"/><circle cx="9" cy="6" r="1.2" fill="#e02020"/><path d="M7,7H13L15.5,9.5V15.5H7Z" fill="#fff" stroke="#000" stroke-width="1"/><path d="M9,10.5H12M9,13H14" stroke="#000" stroke-width="1"/></svg>
<svg style="left:1899px;top:769px" width="16" height="16" viewBox="0 0 16 16" shape-rendering="crispEdges"><path d="M4,2H10L13,5V14H4Z" fill="#fff" stroke="#e02020" stroke-width="1"/><path d="M6,8H11M6,11H11" stroke="#e02020"/></svg>
<svg style="left:1899px;top:790px" width="16" height="16" viewBox="0 0 16 16" shape-rendering="crispEdges"><rect x="1" y="2" width="12" height="9" fill="#fff" stroke="#000" stroke-width="1"/><rect x="3" y="4" width="8" height="5" fill="none" stroke="#000"/><path d="M7,7H13L15.5,9.5V15.5H7Z" fill="#fff" stroke="#e02020" stroke-width="1"/><path d="M9,10.5H12M9,13H14" stroke="#e02020" stroke-width="1"/></svg>
<svg style="left:1899px;top:811px" width="16" height="16" viewBox="0 0 16 16" shape-rendering="crispEdges"><path d="M6,1V11M1,6H11" stroke="#000" stroke-width="1.5"/><circle cx="6" cy="6" r="2" fill="#000"/><path d="M7,7H13L15.5,9.5V15.5H7Z" fill="#fff" stroke="#e02020" stroke-width="1"/><path d="M9,10.5H12M9,13H14" stroke="#e02020" stroke-width="1"/></svg>
<div class="a" style="left:1899px;top:198px;width:17px;height:1px;background:#b8bec8"></div>
<div class="a" style="left:1899px;top:311px;width:17px;height:1px;background:#b8bec8"></div>
<div class="a" style="left:1899px;top:570px;width:17px;height:1px;background:#b8bec8"></div>
<div class="a" style="left:1899px;top:662px;width:17px;height:1px;background:#b8bec8"></div>
<div class="a" style="left:1899px;top:733px;width:17px;height:1px;background:#b8bec8"></div>
<div class="a" style="left:1899px;top:762px;width:17px;height:1px;background:#b8bec8"></div>
<svg style="left:1899px;top:857px" width="16" height="16" viewBox="0 0 16 16" shape-rendering="crispEdges"><rect x="1" y="1" width="14" height="4" fill="#fff" stroke="#000"/><path d="M3,1V3M5,1V3M7,1V3M9,1V3M11,1V3M13,1V3" stroke="#000" stroke-width="0.6"/><path d="M5,7V12L3,11" fill="none" stroke="#000"/><path d="M7,7H13L15.5,9.5V15.5H7Z" fill="#fff" stroke="#000" stroke-width="1"/><path d="M9,10.5H12M9,13H14" stroke="#000" stroke-width="1"/></svg>
<svg style="left:1899px;top:877px" width="16" height="16" viewBox="0 0 16 16" shape-rendering="crispEdges"><path d="M1,3H10M1,6H11M1,9H8M1,12H8" stroke="#666" stroke-width="1"/><path d="M9,1L11,3L9,5" fill="none" stroke="#666"/><path d="M7,7H13L15.5,9.5V15.5H7Z" fill="#fff" stroke="#000" stroke-width="1"/><path d="M9,10.5H12M9,13H14" stroke="#000" stroke-width="1"/></svg>
<svg style="left:1899px;top:898px" width="16" height="16" viewBox="0 0 16 16" shape-rendering="crispEdges"><ellipse cx="7" cy="6" rx="6" ry="5" fill="#888" stroke="#000"/><ellipse cx="7" cy="6" rx="3" ry="2.5" fill="#555"/><path d="M7,7H13L15.5,9.5V15.5H7Z" fill="#fff" stroke="#000" stroke-width="1"/><path d="M9,10.5H12M9,13H14" stroke="#000" stroke-width="1"/></svg>
<svg style="left:1899px;top:919px" width="16" height="16" viewBox="0 0 16 16" shape-rendering="crispEdges"><path d="M2,14V4L6,1V14Z" fill="#8ab0d0" stroke="#1a3a5a" stroke-width="1"/><path d="M6,6L10,2V9" fill="none" stroke="#1a3a5a"/><path d="M7,7H13L15.5,9.5V15.5H7Z" fill="#fff" stroke="#000" stroke-width="1"/><path d="M9,10.5H12M9,13H14" stroke="#000" stroke-width="1"/></svg>
<svg style="left:1899px;top:941px" width="16" height="16" viewBox="0 0 16 16" shape-rendering="crispEdges"><path d="M1,5H15L12,2H1Z" fill="#6a8ab0" stroke="#1a3a5a" stroke-width="0.6"/><path d="M1,7H13M1,10H13M1,13H13" stroke="#1a3a5a" stroke-width="1"/><path d="M7,7H13L15.5,9.5V15.5H7Z" fill="#fff" stroke="#000" stroke-width="1"/><path d="M9,10.5H12M9,13H14" stroke="#000" stroke-width="1"/></svg>
<svg style="left:1899px;top:960px" width="16" height="16" viewBox="0 0 16 16" shape-rendering="crispEdges"><path d="M1,3H14M1,8H14M1,13H14" stroke="#2a5a88" stroke-width="1.5"/><path d="M4,1V15M9,1V15" stroke="#a01010" stroke-width="2"/><path d="M7,7H13L15.5,9.5V15.5H7Z" fill="#fff" stroke="#000" stroke-width="1"/><path d="M9,10.5H12M9,13H14" stroke="#000" stroke-width="1"/></svg>
<svg style="left:1899px;top:981px" width="16" height="16" viewBox="0 0 16 16" shape-rendering="crispEdges"><path d="M1,3H14M1,8H14M1,13H14" stroke="#2a5a88" stroke-width="1.5"/><path d="M4,1V15M9,1V15" stroke="#8ac0e0" stroke-width="2"/><path d="M7,7H13L15.5,9.5V15.5H7Z" fill="#fff" stroke="#000" stroke-width="1"/><path d="M9,10.5H12M9,13H14" stroke="#000" stroke-width="1"/></svg>
<div class="a" style="left:49px;top:948px;width:1793px;height:65px;background:#f0f0f0"></div>
<div class="a" style="left:1786px;top:165px;width:54px;height:16px;background:#333"></div>
<div class="a" style="left:1787px;top:166px;width:17px;height:14px;background:#d0d0d0;border-top:1px solid #f4f4f4;border-left:1px solid #f4f4f4"></div>
<svg style="left:1787px;top:165px" width="17" height="16" viewBox="0 0 16 16"><path d="M2,2H14L9,8V14L7,12V8Z" fill="none" stroke="#222" stroke-width="1.1"/></svg>
<div class="a" style="left:1805px;top:166px;width:17px;height:14px;background:#d0d0d0;border-top:1px solid #f4f4f4;border-left:1px solid #f4f4f4"></div>
<svg style="left:1805px;top:165px" width="17" height="16" viewBox="0 0 16 16"><path d="M4,13V3L12,13V3" fill="none" stroke="#222" stroke-width="1.2"/></svg>
<div class="a" style="left:1823px;top:166px;width:17px;height:14px;background:#d0d0d0;border-top:1px solid #f4f4f4;border-left:1px solid #f4f4f4"></div>
<svg style="left:1823px;top:165px" width="17" height="16" viewBox="0 0 16 16"><path d="M3,13L8,3L13,13" fill="none" stroke="#222" stroke-width="1.2"/></svg>
<div class="a" style="left:1643px;top:188px;width:192px;height:94px;background:#efefef;border:1px solid #c8ccd4;box-shadow:inset -2px -2px 0 #a8acb4, inset 2px 2px 0 #fff"></div>
<div class="a" style="left:1647px;top:192px;width:184px;height:22px;background:#b9bdc6"></div>
<div class="t" style="left:1649px;top:198px;font-size:11px;color:#4a4a56;"><b>Koordinat Kutusu</b></div>
<svg style="left:1817px;top:197px" width="12" height="12"><path d="M2,2L10,10M10,2L2,10" stroke="#777" stroke-width="1.3"/></svg>
<div class="a" style="left:1649px;top:218px;width:12px;height:12px;border:1px solid #555;border-radius:3px;background:#fff"></div>
<div class="t" style="left:1661px;top:221px;font-size:10px;color:#222;">X</div>
<div class="a" style="left:1677px;top:216px;width:63px;height:18px;background:#fff;border-bottom:1px solid #b8b8b8;border-right:1px solid #d8d8d8"></div>
<div class="t" style="left:1682px;top:220px;font-size:11px;color:#1a1a1a;">1194.62 cm</div>
<div class="t" style="left:1746px;top:221px;font-size:10px;color:#222;">L</div>
<div class="a" style="left:1767px;top:216px;width:63px;height:18px;background:#fff;border-bottom:1px solid #b8b8b8;border-right:1px solid #d8d8d8"></div>
<div class="t" style="left:1771px;top:220px;font-size:11px;color:#1a1a1a;">2216.17 cm</div>
<div class="a" style="left:1649px;top:239px;width:12px;height:12px;border:1px solid #555;border-radius:3px;background:#fff"></div>
<div class="t" style="left:1661px;top:242px;font-size:10px;color:#222;">Y</div>
<div class="a" style="left:1677px;top:237px;width:63px;height:18px;background:#fff;border-bottom:1px solid #b8b8b8;border-right:1px solid #d8d8d8"></div>
<div class="t" style="left:1682px;top:241px;font-size:11px;color:#1a1a1a;">2416.2 cm</div>
<div class="t" style="left:1746px;top:242px;font-size:10px;color:#222;">A</div>
<div class="a" style="left:1767px;top:237px;width:63px;height:18px;background:#fff;border-bottom:1px solid #b8b8b8;border-right:1px solid #d8d8d8"></div>
<div class="t" style="left:1771px;top:241px;font-size:11px;color:#1a1a1a;">303.571</div>
<div class="a" style="left:1649px;top:260px;width:12px;height:12px;border:1px solid #555;border-radius:3px;background:#fff"></div>
<div class="t" style="left:1661px;top:263px;font-size:10px;color:#222;">Z</div>
<div class="a" style="left:1677px;top:258px;width:63px;height:18px;background:#ececec;border-bottom:1px solid #b8b8b8;border-right:1px solid #d8d8d8"></div>
<div class="t" style="left:1682px;top:262px;font-size:11px;color:#1a1a1a;">699.84 cm</div>
<div class="t" style="left:50px;top:950px;font-size:10px;color:#101010;font-weight:bold">Komut :</div>
<div class="t" style="left:50px;top:963px;font-size:10px;color:#101010;font-weight:bold">*İptal*</div>
<div class="t" style="left:50px;top:976px;font-size:10px;color:#101010;font-weight:bold">Komut :</div>
<div class="t" style="left:50px;top:989px;font-size:10px;color:#101010;font-weight:bold">*İptal*</div>
<div class="t" style="left:50px;top:1002px;font-size:10px;color:#101010;font-weight:bold">Komut :</div>
<div class="t" style="left:1541px;top:942px;font-size:19.5px;color:#b6b6b6;">Windows'u Etkinleştir</div>
<div class="t" style="left:1541px;top:965px;font-size:15px;color:#b4b4b4;">Windows'u etkinleştirmek için Ayarlar'a gidin.</div>
<div class="a" style="left:49px;top:1013px;width:1793px;height:19px;background:linear-gradient(#eef0f3 0%,#d5d9df 45%,#bfc4cb 55%,#b4b9c1 100%);border-top:1px solid #9ea4ad"></div>
<div class="a" style="left:306px;top:1014px;width:1px;height:18px;background:#8a9098"></div>
<div class="a" style="left:307px;top:1014px;width:1px;height:18px;background:#e8eaee"></div>
<div class="a" style="left:1612px;top:1014px;width:1px;height:18px;background:#8a9098"></div>
<div class="a" style="left:1613px;top:1014px;width:1px;height:18px;background:#e8eaee"></div>
<div class="a" style="left:1689px;top:1014px;width:1px;height:18px;background:#8a9098"></div>
<div class="a" style="left:1690px;top:1014px;width:1px;height:18px;background:#e8eaee"></div>
<div class="a" style="left:1766px;top:1014px;width:1px;height:18px;background:#8a9098"></div>
<div class="a" style="left:1767px;top:1014px;width:1px;height:18px;background:#e8eaee"></div>
<div class="t" style="left:55px;top:1019px;font-size:11px;color:#303040;">BOŞ</div>
<div class="t" style="left:311px;top:1019px;font-size:11px;color:#303040;">Hazır</div>
<div class="t" style="left:1618px;top:1018px;font-size:12px;color:#303040;">tf / m</div>
<div class="t" style="left:1697px;top:1019px;font-size:11px;color:#303040;">1 : 50</div>
<div class="t" style="left:1773px;top:1019px;font-size:11px;color:#303040;">% 38</div>
<div class="a" style="left:0;top:1032px;width:1920px;height:48px;background:#1c1f26;border-top:1px solid #2c3038"></div>
<svg style="left:17px;top:1044px" width="28" height="21" viewBox="0 0 32 24"><defs><linearGradient id="cl" x1="0" y1="0" x2="0" y2="1"><stop offset="0" stop-color="#f4f8ff"/><stop offset="1" stop-color="#a8c0e8"/></linearGradient></defs><path d="M6,20A5,5 0 0 1 7,10A7,7 0 0 1 20,7A6,6 0 0 1 27,13A4,4 0 0 1 26,20Z" fill="url(#cl)"/></svg>
<div class="t" style="left:50px;top:1042px;font-size:12px;color:#ffffff;">12°C</div>
<div class="t" style="left:50px;top:1058px;font-size:12px;color:#e8e8e8;">Bulutlu</div>
<svg style="left:697px;top:1044px" width="24" height="24"><g fill="#4cc2ff"><rect x="1" y="1" width="10.5" height="10.5"/><rect x="12.5" y="1" width="10.5" height="10.5"/><rect x="1" y="12.5" width="10.5" height="10.5"/><rect x="12.5" y="12.5" width="10.5" height="10.5"/></g></svg>
<div class="a" style="left:736px;top:1040px;width:99px;height:32px;border-radius:16px;background:#2a2e36;border:1px solid #343842"></div>
<svg style="left:765px;top:1048px" width="16" height="16"><circle cx="7" cy="7" r="5" fill="none" stroke="#fff" stroke-width="1.6"/><path d="M10.5,10.5L15,15" stroke="#fff" stroke-width="1.8"/></svg>
<div class="t" style="left:786px;top:1050px;font-size:13px;color:#ffffff;">Ara</div>
<svg style="left:848px;top:1044px" width="26" height="24"><rect x="1" y="8" width="14" height="14" fill="#6a6e76"/><rect x="9" y="2" width="15" height="15" fill="#d8dce2"/></svg>
<svg style="left:891px;top:1044px" width="26" height="24"><circle cx="12" cy="12" r="11" fill="#7b83eb"/><path d="M1,23L4,16" stroke="#7b83eb" stroke-width="3"/><rect x="6" y="8" width="9" height="8" rx="1.5" fill="#fff"/><path d="M15,10L19,8V16L15,14Z" fill="#fff"/></svg>
<svg style="left:934px;top:1044px" width="26" height="24"><path d="M1,3H10L12,5H25V22H1Z" fill="#f0b429"/><path d="M1,8H25V22H1Z" fill="#ffd04a"/><rect x="8" y="15" width="11" height="5" rx="1" fill="#1e88e5"/></svg>
<svg style="left:979px;top:1043px" width="26" height="26"><path d="M8,6A5,4 0 0 1 18,6" fill="none" stroke="#4fc3f7" stroke-width="2"/><rect x="2" y="6" width="22" height="18" rx="3" fill="#f4f4f4"/><rect x="8" y="11" width="4.5" height="4.5" fill="#f25022"/><rect x="13.5" y="11" width="4.5" height="4.5" fill="#7fba00"/><rect x="8" y="16.5" width="4.5" height="4.5" fill="#00a4ef"/><rect x="13.5" y="16.5" width="4.5" height="4.5" fill="#ffb900"/></svg>
<svg style="left:1022px;top:1044px" width="26" height="24"><path d="M1,9L13,1L25,9V22H1Z" fill="#1f6fc5"/><path d="M1,9L13,17L25,9V22H1Z" fill="#2e9bf0"/><path d="M1,22L13,13L25,22Z" fill="#4fb6ff"/></svg>
<svg style="left:1068px;top:1043px" width="24" height="26"><path d="M4,6L15,1L21,4V22L15,25L4,20Z" fill="#e64a19"/><path d="M4,6L15,1V25L4,20Z" fill="#f4511e"/><path d="M8,8L15,6V20L8,18Z" fill="#1c1f26"/></svg>
<svg style="left:1110px;top:1043px" width="26" height="26"><circle cx="13" cy="13" r="12" fill="#db4437"/><path d="M13,13L2.6,19A12,12 0 0 0 19,23.4Z" fill="#0f9d58"/><path d="M13,13L19,23.4A12,12 0 0 0 25,13H13Z" fill="#ffcd40"/><path d="M13,7H24A12,12 0 0 0 2.6,7.5L7.8,16Z" fill="#db4437"/><circle cx="13" cy="13" r="5.5" fill="#fff"/><circle cx="13" cy="13" r="4.3" fill="#4285f4"/></svg>
<div class="a" style="left:1119px;top:1074px;width:8px;height:3px;background:#8a8e96;border-radius:2px"></div>
<div class="a" style="left:1148px;top:1038px;width:39px;height:38px;border-radius:4px;background:#2a2e36"></div>
<svg style="left:1155px;top:1044px" width="26" height="24"><rect x="1" y="1" width="6" height="5" fill="#e53935"/><rect x="1" y="8" width="6" height="15" fill="#fff"/><rect x="9" y="1" width="6" height="22" fill="#fff"/><rect x="17" y="1" width="7" height="6" fill="#fff"/><rect x="17" y="9" width="7" height="6" fill="#fff"/><rect x="17" y="17" width="7" height="6" fill="#fff"/></svg>
<div class="a" style="left:1159px;top:1074px;width:17px;height:3px;background:#4cc2ff;border-radius:2px"></div>
<svg style="left:1198px;top:1043px" width="26" height="26"><path d="M13,2A11,11 0 1 0 13,24C15,24 15,21 13,20C11,18 13,16 16,16H20A5,5 0 0 0 24,11A11,10 0 0 0 13,2Z" fill="#30a8d8"/><circle cx="7" cy="10" r="2" fill="#ff5252"/><circle cx="11" cy="6" r="2" fill="#ffeb3b"/><circle cx="17" cy="7" r="2" fill="#66bb6a"/><path d="M22,4L17,22" stroke="#a0522d" stroke-width="3"/></svg>
<div class="a" style="left:1207px;top:1074px;width:8px;height:3px;background:#8a8e96;border-radius:2px"></div>
<svg style="left:1706px;top:1049px" width="100" height="16"><path d="M3,11L9,5L15,11" fill="none" stroke="#fff" stroke-width="1.4"/><path d="M30,7A10,10 0 0 1 46,7M32.5,9.5A6.5,6.5 0 0 1 43.5,9.5M35,12A3,3 0 0 1 41,12" fill="none" stroke="#fff" stroke-width="1.4"/><circle cx="38" cy="14" r="1.2" fill="#fff"/><path d="M55,6H58L62,2V14L58,10H55Z" fill="none" stroke="#fff" stroke-width="1.2"/><path d="M65,5Q67,8 65,11M68,3Q71,8 68,13" fill="none" stroke="#fff" stroke-width="1.2"/><rect x="78" y="5" width="16" height="9" rx="1.5" fill="none" stroke="#fff" stroke-width="1.2"/><rect x="94" y="7.5" width="2" height="4" fill="#fff"/><path d="M80,4L84,1" stroke="#fff"/></svg>
<div class="t" style="left:1847px;top:1042px;font-size:11px;color:#ffffff;">17:41</div>
<div class="t" style="left:1818px;top:1059px;font-size:11px;color:#ffffff;">25.12.2022</div>
<div class="a" style="left:1884px;top:1048px;width:16px;height:16px;border-radius:50%;background:#4cc2ff"></div>
<div class="t" style="left:1889px;top:1051px;font-size:10px;color:#1c1f26;">1</div>
</body></html>
